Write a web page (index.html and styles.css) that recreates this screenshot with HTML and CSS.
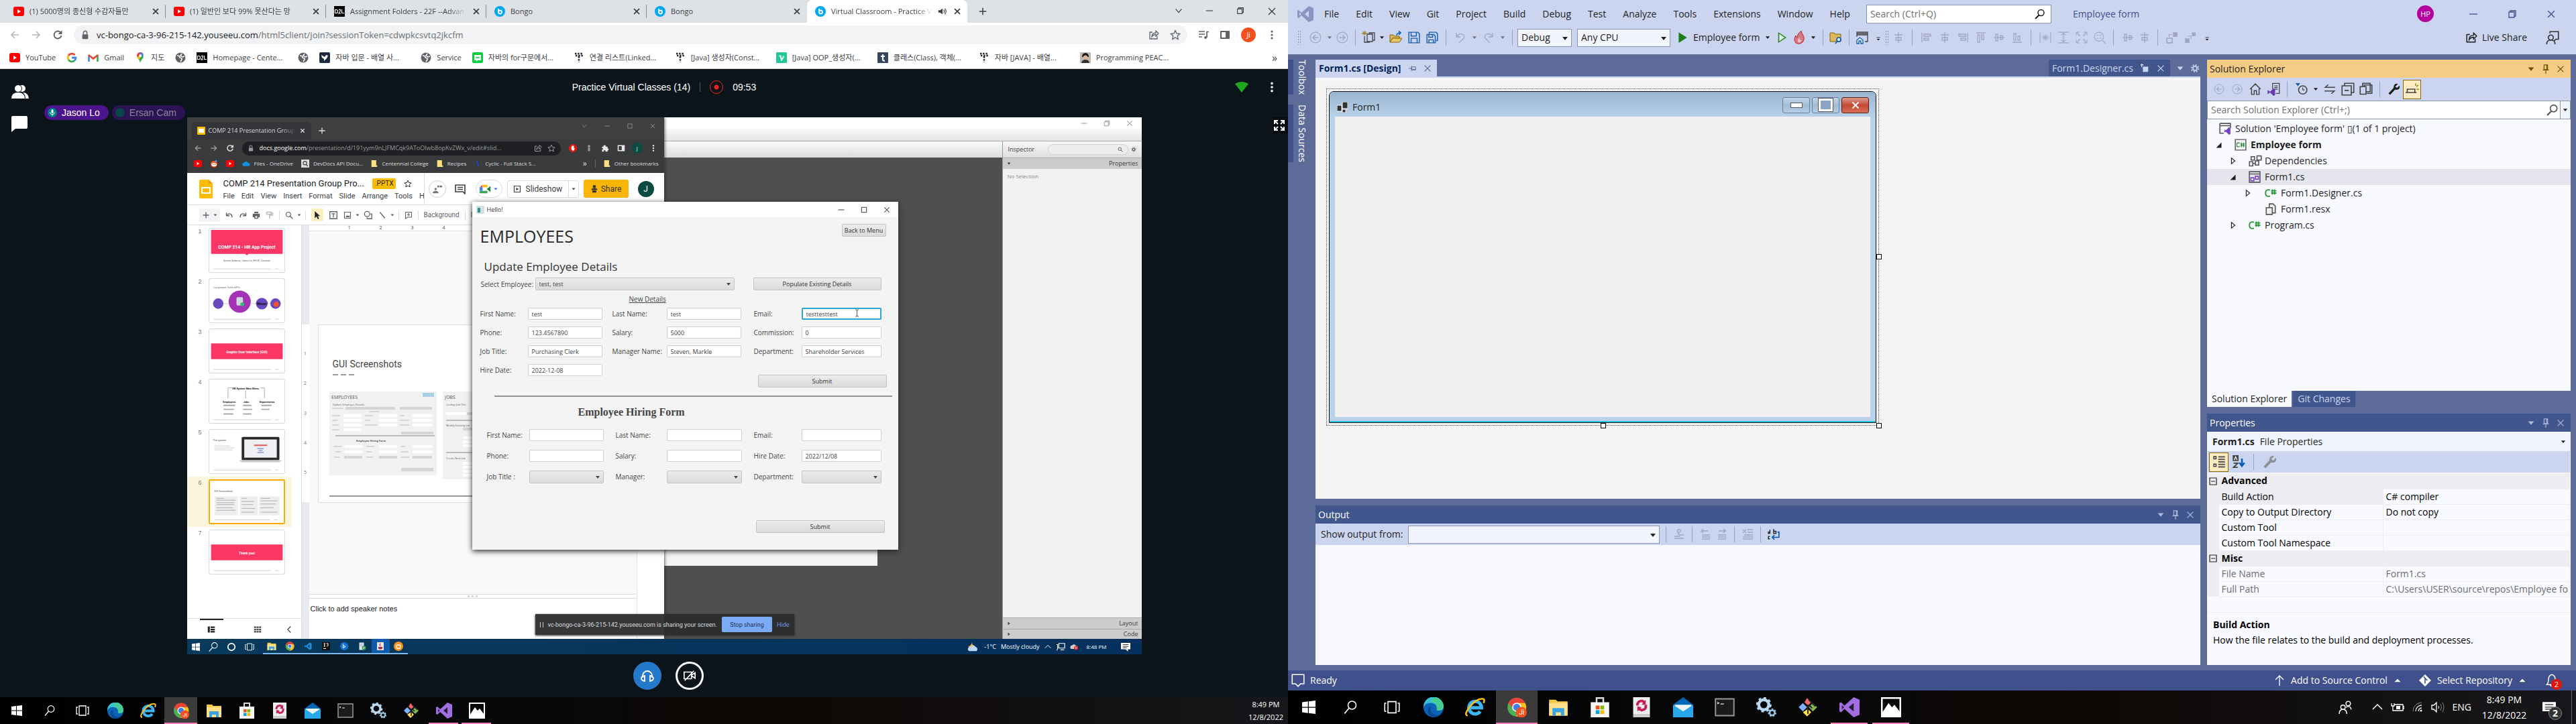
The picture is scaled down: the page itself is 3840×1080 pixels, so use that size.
FILE: index.html
```html
<!DOCTYPE html>
<html lang="en">
<head>
<meta charset="utf-8">
<title>Dual desktop</title>
<link rel="stylesheet" href="styles.css">
</head>
<body>
<svg class="sprite" aria-hidden="true">
  <symbol id="x" viewBox="0 0 16 16"><path d="M3 3l10 10M13 3L3 13" fill="none" stroke="currentColor" stroke-width="1.4"/></symbol>
  <symbol id="xb" viewBox="0 0 16 16"><path d="M3.500 3.500l9 9M12.500 3.500l-9 9" fill="none" stroke="currentColor" stroke-width="2"/></symbol>
  <symbol id="min" viewBox="0 0 16 16"><path d="M2 8h12" stroke="currentColor" stroke-width="1.300"/></symbol>
  <symbol id="max" viewBox="0 0 16 16"><path d="M3 3h10v10H3z" fill="none" stroke="currentColor" stroke-width="1.300"/></symbol>
  <symbol id="restore" viewBox="0 0 16 16"><path d="M3 5h8v8H3zM5 5V3h8v8h-2" fill="none" stroke="currentColor" stroke-width="1.300"/></symbol>
  <symbol id="chev" viewBox="0 0 16 16"><path d="M3 5l5 6 5-6" fill="none" stroke="currentColor" stroke-width="1.300"/></symbol>
  <symbol id="chevup" viewBox="0 0 16 16"><path d="M1 11l7-7 7 7" fill="none" stroke="currentColor" stroke-width="1.500"/></symbol>
  <symbol id="chevl" viewBox="0 0 16 16"><path d="M11 2L5 8l6 6" fill="none" stroke="currentColor" stroke-width="1.600"/></symbol>
  <symbol id="plus" viewBox="0 0 16 16"><path d="M8 2v12M2 8h12" stroke="currentColor" stroke-width="1.800"/></symbol>
  <symbol id="tri" viewBox="0 0 16 16"><path d="M3 5h10l-5 6z" fill="currentColor"/></symbol>
  <symbol id="triup" viewBox="0 0 16 16"><path d="M2 11h12L8 5z" fill="currentColor"/></symbol>
  <symbol id="trir" viewBox="0 0 16 16"><path d="M5 3l6 5-6 5z" fill="none" stroke="currentColor" stroke-width="1.300"/></symbol>
  <symbol id="trirf" viewBox="0 0 16 16"><path d="M5 3l6 5-6 5z" fill="currentColor"/></symbol>
  <symbol id="tric" viewBox="0 0 16 16"><path d="M12 4v9H3z" fill="currentColor"/></symbol>
  <symbol id="yt" viewBox="0 0 16 16"><rect y="1" width="16" height="14" rx="3" fill="#f00"/><path d="M6 5l5 3-5 3z" fill="#fff"/></symbol>
  <symbol id="d2l" viewBox="0 0 16 16"><rect width="16" height="16" fill="#000"/><path d="M1.500 5v6M2 5.500h1.500q2 0 2 2.500t-2 2.500H2M7 6q2-2 2.500 0Q9.500 8 7 11h3M11.500 5v5.500h3.500" fill="none" stroke="#fff" stroke-width="1.200"/></symbol>
  <symbol id="bongo" viewBox="0 0 16 16"><circle cx="8" cy="8" r="8" fill="#00a8f3"/><circle cx="8.500" cy="9" r="2.500" fill="none" stroke="#fff" stroke-width="1.800"/><path d="M6 4v5" stroke="#fff" stroke-width="1.800"/></symbol>
  <symbol id="back" viewBox="0 0 16 16"><path d="M14 8H3M8 3L3 8l5 5" fill="none" stroke="currentColor" stroke-width="1.700"/></symbol>
  <symbol id="fwd" viewBox="0 0 16 16"><path d="M2 8h11M8 3l5 5-5 5" fill="none" stroke="currentColor" stroke-width="1.700"/></symbol>
  <symbol id="reload" viewBox="0 0 16 16"><path d="M13 5.500A5.500 5.500 0 1 0 13.500 9" fill="none" stroke="currentColor" stroke-width="1.900"/><path d="M14.500 1v6h-6z" fill="currentColor"/></symbol>
  <symbol id="lock" viewBox="0 0 16 16"><rect x="3" y="7" width="10" height="8" rx="1" fill="currentColor"/><path d="M5 7V4.500a3 3 0 0 1 6 0V7" fill="none" stroke="currentColor" stroke-width="1.700"/></symbol>
  <symbol id="share" viewBox="0 0 16 16"><path d="M6 4H2v10h11v-4M5 11q0-6 6-6V2l4 4-4 4V7.500q-4 0-6 3.500z" fill="none" stroke="currentColor" stroke-width="1.300"/></symbol>
  <symbol id="star" viewBox="0 0 16 16"><path d="M8 1.500l2 4.500 4.800.5-3.600 3.200 1 4.800L8 12l-4.200 2.500 1-4.800L1.200 6.500 6 6z" fill="none" stroke="currentColor" stroke-width="1.300"/></symbol>
  <symbol id="music" viewBox="0 0 16 16"><path d="M1 3h9M1 7h9M1 11h5M13 3v9M12.500 3.500H16" stroke="currentColor" stroke-width="1.700"/><circle cx="11" cy="12" r="2" fill="currentColor"/></symbol>
  <symbol id="panel" viewBox="0 0 16 16"><path d="M2 3h12v10H2z" fill="none" stroke="currentColor" stroke-width="2"/><path d="M9 3h5v10H9z" fill="currentColor"/></symbol>
  <symbol id="dots" viewBox="0 0 16 16"><circle cx="8" cy="3" r="1.600" fill="currentColor"/><circle cx="8" cy="8" r="1.600" fill="currentColor"/><circle cx="8" cy="13" r="1.600" fill="currentColor"/></symbol>
  <symbol id="speaker" viewBox="0 0 16 16"><path d="M1 6h3l4-3v10l-4-3H1z" fill="currentColor"/><path d="M10 5q2 3 0 6M12 3q4 5 0 10" fill="none" stroke="currentColor" stroke-width="1.300"/></symbol>
  <symbol id="google" viewBox="0 0 16 16"><g fill="none" stroke-width="2.800"><path d="M12.500 4A6 6 0 0 0 3 5" stroke="#ea4335"/><path d="M3 5a6 6 0 0 0 0 6" stroke="#fbbc04"/><path d="M3 11a6 6 0 0 0 9 1.500" stroke="#34a853"/><path d="M12 12.500Q14 11 14 8H8" stroke="#4285f4"/></g></symbol>
  <symbol id="gmail" viewBox="0 0 16 16"><path d="M1.500 14V4" stroke="#4285f4" stroke-width="2.600"/><path d="M14.500 14V4" stroke="#34a853" stroke-width="2.600"/><path d="M1 4l7 5.500L15 4" fill="none" stroke="#ea4335" stroke-width="2.800"/></symbol>
  <symbol id="pin" viewBox="0 0 16 16"><path d="M8 16Q7 11 4 8.500L12 3q2 4-1 7-2 2-3 6z" fill="#34a853"/><path d="M3 6a5 5 0 0 1 5-6l3 1-6 8z" fill="#ea4335"/><path d="M8 0a5 5 0 0 1 5 4L9 8z" fill="#4285f4"/><path d="M3.500 8L8 3l2 3-4 5z" fill="#fbbc04"/><circle cx="8" cy="5" r="2" fill="#fff"/></symbol>
  <symbol id="globe" viewBox="0 0 16 16"><circle cx="8" cy="8" r="7.500" fill="#5f6368"/><path d="M3 5q4 0 4 3l3 1v2l-2 3M10 2l-2 3 3 2 3-1" fill="none" stroke="#fff" stroke-width="1.500"/></symbol>
  <symbol id="bird" viewBox="0 0 16 16"><rect width="16" height="16" rx="2" fill="#1e2a3e"/><path d="M3 4l5 3 2-3 3 1-2 4-4 4v-3L4 8z" fill="#fff"/></symbol>
  <symbol id="naver" viewBox="0 0 16 16"><rect width="16" height="16" rx="2" fill="#06d03f"/><path d="M3 4h10v8H8l-2 2v-2H3z" fill="#fff"/><path d="M5 8h6" stroke="#06d03f" stroke-width="1.500"/></symbol>
  <symbol id="tdots" viewBox="0 0 16 16"><path d="M2 2h12M8 6v9M3 5h11" stroke="#222" stroke-width="2.600" stroke-dasharray="2.400 1.800"/></symbol>
  <symbol id="velog" viewBox="0 0 16 16"><rect width="16" height="16" rx="1" fill="#20c997"/><path d="M4.500 5.500h2l1.500 6q3-3 3-6" fill="none" stroke="#fff" stroke-width="1.800"/></symbol>
  <symbol id="tumblr" viewBox="0 0 16 16"><rect width="16" height="16" rx="1" fill="#36465d"/><path d="M8 3v8q0 2 3 1.500M5 6h6" fill="none" stroke="#fff" stroke-width="2.200"/></symbol>
  <symbol id="face" viewBox="0 0 16 16"><rect width="16" height="16" fill="#bdb9b0"/><path d="M3 7q0-6 5-6t5 6z" fill="#1c1a18"/><circle cx="8" cy="8" r="3.500" fill="#d9b294"/><path d="M2 16q1-5 6-5t6 5z" fill="#333"/></symbol>
  <symbol id="users" viewBox="0 0 26 20"><ellipse cx="16" cy="5" rx="5" ry="5" fill="#fff"/><path d="M17 11q8 0 9 9h-5q0-6-4-9z" fill="#fff"/><circle cx="10" cy="5" r="5.500" fill="#fff" stroke="#0c141b"/><path d="M0 20q0-9 10-9t10 9z" fill="#fff"/></symbol>
  <symbol id="bubble" viewBox="0 0 24 24"><path d="M2 0h20q2 0 2 2v15q0 2-2 2H6l-6 5V2q0-2 2-2z" fill="#fff"/></symbol>
  <symbol id="wifi" viewBox="0 0 20 16"><path d="M0 3q10-6 20 0L10 16z" fill="#1fa81f"/></symbol>
  <symbol id="expand" viewBox="0 0 16 16"><path d="M1 6V1h5M10 1h5v5M15 10v5h-5M6 15H1v-5M1 1l5 5M15 1l-5 5M15 15l-5-5M1 15l5-5" fill="none" stroke="#fff" stroke-width="2"/></symbol>
  <symbol id="mic" viewBox="0 0 14 14"><circle cx="7" cy="7" r="7" fill="#008081"/><rect x="5.500" y="2" width="3" height="6" rx="1.500" fill="#fff"/><path d="M3.500 6.500q0 3 3.500 3t3.500-3M7 9.500V12" fill="none" stroke="#fff"/></symbol>
  <symbol id="head" viewBox="0 0 20 20"><path d="M3 13v-3a7 7 0 0 1 14 0v3" fill="none" stroke="#fff" stroke-width="1.800"/><path d="M6 10v8q-5-1-5-4t5-4zM14 10v8q5-1 5-4t-5-4z" fill="none" stroke="#fff" stroke-width="1.800"/></symbol>
  <symbol id="nocam" viewBox="0 0 22 18"><path d="M2 3h12v11H2zM14 8l6-4v9l-6-4M3 17L18 1" fill="none" stroke="#fff" stroke-width="1.800"/></symbol>
  <symbol id="slidesf" viewBox="0 0 20 28"><path d="M2 0h12l6 6v20q0 2-2 2H2q-2 0-2-2V2q0-2 2-2z" fill="#fbbc04"/><path d="M14 0l6 6h-6z" fill="#e8a000"/><path d="M4 12h12v8H4z" fill="none" stroke="#fff" stroke-width="2"/></symbol>
  <symbol id="slidesm" viewBox="0 0 12 12"><rect width="12" height="12" rx="1" fill="#fbbc04"/><rect x="2" y="3" width="8" height="6" fill="#fff"/></symbol>
  <symbol id="hand" viewBox="0 0 16 16"><path d="M5 0h6l5 5v6l-5 5H5l-5-5V5z" fill="#e3160b"/><path d="M5 5v5l2 3h3l2-5-2 1V4L9 3 7 3z" fill="#fff"/></symbol>
  <symbol id="puzzle" viewBox="0 0 16 16"><path d="M2 5h3q-1-3 2-3t2 3h4v4q2-1 2 1.500T13 12v3H9q0-3-2-3t-2 3H2v-4q2 0 2-1.500T2 8z" fill="currentColor"/></symbol>
  <symbol id="person" viewBox="0 0 16 16"><circle cx="8" cy="4" r="2.500" fill="currentColor"/><path d="M6 7h4v7H6z" fill="currentColor"/></symbol>
  <symbol id="activity" viewBox="0 0 16 16"><circle cx="5" cy="8" r="2" fill="currentColor"/><path d="M0 15q0-4 5-4t5 4zM8 2h3v3H8zM12 2h4v3h-4z" fill="currentColor"/></symbol>
  <symbol id="shareman" viewBox="0 0 16 16"><circle cx="8" cy="3" r="3" fill="currentColor"/><path d="M2 10q0-4 6-4t6 4zM4 11h8v4H4z" fill="currentColor"/></symbol>
  <symbol id="reddit" viewBox="0 0 16 16"><circle cx="8" cy="9" r="6.500" fill="#ff5a1f"/><ellipse cx="8" cy="10" rx="5" ry="3.500" fill="#fff"/><circle cx="6" cy="9.500" r="1" fill="#f40"/><circle cx="10" cy="9.500" r="1" fill="#f40"/><circle cx="12" cy="3" r="2" fill="#39f"/></symbol>
  <symbol id="cloud" viewBox="0 0 16 12"><path d="M4 11a3.500 3.500 0 0 1 0-7 4.500 4.500 0 0 1 8 1 3 3 0 0 1 1 6z" fill="#1490df"/></symbol>
  <symbol id="cloudx" viewBox="0 0 16 12"><path d="M4 10a3.500 3.500 0 0 1 0-7 4.500 4.500 0 0 1 8 1 3 3 0 0 1 1 6z" fill="#ccc"/><circle cx="12" cy="8" r="4" fill="#e02b20"/><path d="M10.500 6.500l3 3M13.500 6.500l-3 3" stroke="#fff"/></symbol>
  <symbol id="dev" viewBox="0 0 16 16"><rect width="16" height="16" fill="#ddd"/><circle cx="7.500" cy="7" r="3.500" fill="none" stroke="#444" stroke-width="1.500"/><path d="M10 10l3 3" stroke="#444" stroke-width="2"/></symbol>
  <symbol id="fold" viewBox="0 0 12 14"><path d="M0 0h10v11h2v3H0z" fill="#ffdf7e"/></symbol>
  <symbol id="slash" viewBox="0 0 8 14"><path d="M2 1l4 12" stroke="#1f49b6" stroke-width="3"/></symbol>
  <symbol id="undo" viewBox="0 0 16 16"><path d="M2 3v6h6M2.500 8.500Q7 3 11 6.500q3 2.500 2 6" fill="none" stroke="currentColor" stroke-width="1.800"/></symbol>
  <symbol id="redo" viewBox="0 0 16 16"><path d="M14 3v6H8M13.500 8.500Q9 3 5 6.500q-3 2.500-2 6" fill="none" stroke="currentColor" stroke-width="1.800"/></symbol>
  <symbol id="print" viewBox="0 0 16 16"><path d="M4 1h8v3H4zM1 5h14v7h-3v3H4v-3H1z" fill="currentColor"/><path d="M6 10h4v3H6z" fill="#fff"/></symbol>
  <symbol id="roller" viewBox="0 0 16 16"><path d="M2 2h9v4H2zM11 4h3v4H8v7" fill="none" stroke="currentColor" stroke-width="2"/></symbol>
  <symbol id="mag" viewBox="0 0 16 16"><circle cx="6.500" cy="6.500" r="4.500" fill="none" stroke="currentColor" stroke-width="1.600"/><path d="M10 10l5 5" stroke="currentColor" stroke-width="1.800"/></symbol>
  <symbol id="magr" viewBox="0 0 16 16"><circle cx="9.500" cy="6" r="4.500" fill="none" stroke="currentColor" stroke-width="1.500"/><path d="M6.500 9.500L1 15" stroke="currentColor" stroke-width="1.900"/></symbol>
  <symbol id="arrow" viewBox="0 0 16 16"><path d="M3 0v14l3.500-3.500L9 16l2.500-1L9 9.500h4.500z" fill="#222"/></symbol>
  <symbol id="tbox" viewBox="0 0 16 16"><path d="M2 2h12v12H2zM5 5.500h6M8 5.500V12" fill="none" stroke="currentColor" stroke-width="1.500"/></symbol>
  <symbol id="img" viewBox="0 0 16 16"><path d="M2 2h12v12H2z" fill="none" stroke="currentColor" stroke-width="1.500"/><path d="M4 12l3-4 2 2 2-2 2 4z" fill="currentColor"/></symbol>
  <symbol id="shape" viewBox="0 0 16 16"><circle cx="6" cy="6" r="4.500" fill="none" stroke="currentColor" stroke-width="1.500"/><path d="M12 6h2v8H6v-2" fill="none" stroke="currentColor" stroke-width="1.500"/></symbol>
  <symbol id="line" viewBox="0 0 16 16"><path d="M3 2l10 12" stroke="currentColor" stroke-width="1.700"/></symbol>
  <symbol id="comment" viewBox="0 0 16 16"><path d="M1 2h14v13l-3-3H1zM4 5.500h8M4 8.500h8" fill="none" stroke="currentColor" stroke-width="1.600"/></symbol>
  <symbol id="addc" viewBox="0 0 16 16"><path d="M2 2h12v10H6l-4 3zM8 4v6M5 7h6" fill="none" stroke="currentColor" stroke-width="1.400"/></symbol>
  <symbol id="meet" viewBox="0 0 20 16"><path d="M1 5h5V1z" fill="#ea4335"/><path d="M1 5h5v6H1z" fill="#4285f4"/><path d="M6 1h8v4H6z" fill="#fbbc04"/><path d="M6 11h8v4H1v-4z" fill="#34a853"/><path d="M13 8l6-5v10z" fill="#188038"/></symbol>
  <symbol id="play" viewBox="0 0 16 16"><path d="M2 2h12v12H2z" fill="none" stroke="currentColor" stroke-width="1.600"/><path d="M6 5l5 3-5 3z" fill="currentColor"/></symbol>
  <symbol id="list" viewBox="0 0 16 16"><path d="M1 2h4v12H1zM6.500 2H15v3H6.500zM6.500 6.500H15v3H6.500zM6.500 11H15v3H6.500z" fill="currentColor"/></symbol>
  <symbol id="grid" viewBox="0 0 16 16"><path d="M1 2h4v3H1zM6 2h4v3H6zM11 2h4v3h-4zM1 6.500h4v3H1zM6 6.500h4v3H6zM11 6.500h4v3h-4zM1 11h4v3H1zM6 11h4v3H6zM11 11h4v3h-4z" fill="currentColor"/></symbol>
  <symbol id="win" viewBox="0 0 16 16"><path d="M0 2l7-1v6.500H0zM8 1l8-1v7.500H8zM0 8.500h7V15l-7-1zM8 8.500h8V16l-8-1z" fill="#fff"/></symbol>
  <symbol id="wsearch" viewBox="0 0 16 16"><circle cx="10" cy="5.500" r="4.800" fill="none" stroke="#fff" stroke-width="1.200"/><path d="M6.500 9L1 15.500" stroke="#fff" stroke-width="1.300"/></symbol>
  <symbol id="tview" viewBox="0 0 20 16"><path d="M5 1h10v14H5zM3 3H1v10h2M17 3h2v10h-2" fill="none" stroke="#fff" stroke-width="1.300"/></symbol>
  <symbol id="edge" viewBox="0 0 24 24"><circle cx="12" cy="12" r="12" fill="#0b62b8"/><path d="M0 12A12 12 0 0 1 24 11q0 5-6 5-3 0-2-3 0-5-6-6Q3 6 0 12z" fill="#35c1d8"/><path d="M12 0a12 12 0 0 1 12 11q0 5-6 5-3 0-2-3 0-7-8-8z" fill="#4fd273" opacity=".7"/><path d="M9 12q-2 6 4 9 5 1 8-1-4 5-11 4Q4 20 5 15t4-3z" fill="#0a4a92"/></symbol>
  <symbol id="ie" viewBox="0 0 24 24"><path d="M18 17A7.500 7.500 0 1 1 19.500 12.500H6" fill="none" stroke="#3db5f2" stroke-width="4"/><path d="M3 22Q-2 21 6 11T21 2q3 0 1 5" fill="none" stroke="#fbc21b" stroke-width="2"/></symbol>
  <symbol id="chrome" viewBox="0 0 24 24"><circle cx="12" cy="12" r="11" fill="#4caf50"/><path d="M2 7a11 11 0 0 1 20 0l-10 2-5 4z" fill="#ea4335"/><path d="M22 7H12l4 8-5 8A11 11 0 0 0 22 7z" fill="#fbc116"/><circle cx="12" cy="12" r="5.500" fill="#fff"/><circle cx="12" cy="12" r="4.200" fill="#3d7fe8"/></symbol>
  <symbol id="chromeji" viewBox="0 0 24 24"><use href="#chrome"/><circle cx="17.500" cy="18" r="6.500" fill="#f4511e"/><text x="14.500" y="21" font-size="8" fill="#fff" font-family="Roboto, sans-serif">Ji</text></symbol>
  <symbol id="expl" viewBox="0 0 24 24"><path d="M1 3h8l2 2h12v17H1z" fill="#f7c948"/><path d="M1 7h22v15H1z" fill="#ffe08a"/><path d="M5 22v-9h14v9h-4v-4H9v4z" fill="#3aa3e3"/></symbol>
  <symbol id="store" viewBox="0 0 24 24"><path d="M8 7V1h8v6" fill="none" stroke="#ddd" stroke-width="2"/><path d="M1 6h22v18H1z" fill="#f5f5f5"/><path d="M7 10h4.500v4.500H7z" fill="#f25022"/><path d="M12.500 10H17v4.500h-4.500z" fill="#7fba00"/><path d="M7 15.500h4.500V20H7z" fill="#00a4ef"/><path d="M12.500 15.500H17V20h-4.500z" fill="#ffb900"/></symbol>
  <symbol id="sync" viewBox="0 0 24 24"><path d="M2 0h20v20H2z" fill="#eee"/><path d="M2 20h20v4H2z" fill="#ccc"/><path d="M7 10q0-6 6-5.500l3 2M17 9q1 6-5 6.500l-4-2" fill="none" stroke="#c81e5a" stroke-width="3"/><path d="M17 3v6h-5zM7 17v-6l5 1z" fill="#c81e5a"/></symbol>
  <symbol id="mail" viewBox="0 0 24 24"><path d="M0 9L12 0l12 9v15H0z" fill="#0364b8"/><path d="M2 9h20v8H2z" fill="#eef6fc"/><path d="M0 9l12 8 12-8v15H0z" fill="#28a8ea"/></symbol>
  <symbol id="cmd" viewBox="0 0 24 24"><path d="M1 2h22v20H1z" fill="#1b1b1b" stroke="#999" stroke-width="1.500"/><path d="M3 6l2 1-2 1M7 8h4" stroke="#eee" fill="none"/></symbol>
  <symbol id="gears" viewBox="0 0 24 24"><circle cx="9" cy="9" r="6" fill="none" stroke="#b9d8ef" stroke-width="3.500"/><circle cx="9" cy="9" r="8" fill="none" stroke="#b9d8ef" stroke-width="2.500" stroke-dasharray="3 3.200"/><circle cx="19" cy="18.500" r="3" fill="none" stroke="#9cc6e5" stroke-width="2"/><circle cx="19" cy="18.500" r="4.300" fill="none" stroke="#9cc6e5" stroke-width="1.500" stroke-dasharray="2 1.800"/></symbol>
  <symbol id="gitb" viewBox="0 0 24 24"><path d="M11 1l5 5-4 4-4-4z" fill="#f0696a"/><path d="M1 12l5-5 5 5-5 5z" fill="#80b3ff"/><path d="M12 14l4 4-5 5-5-5z" fill="#ffdd55"/><path d="M18 7l5 5-5 5-5-5z" fill="#87b84f"/><path d="M13 3l8 8M12 9v11M13 9l4 4" stroke="#222" stroke-width="1.500"/></symbol>
  <symbol id="vs" viewBox="0 0 24 24"><path d="M17 0l7 3v18l-7 3L6 14l-4 4-2-1V7l2-1 4 4z" fill="currentColor"/><path d="M17 7v10l-6-5zM3 9.500v5L5.500 12z" fill="#000" opacity=".75"/></symbol>
  <symbol id="vslogo" viewBox="0 0 24 24"><path d="M17 0l7 3v18l-7 3L6 14l-4 4-2-1V7l2-1 4 4z" fill="currentColor"/><path d="M17 7v10l-6-5zM3 9.500v5L5.500 12z" fill="#ccd5f0"/></symbol>
  <symbol id="photo" viewBox="0 0 24 24"><path d="M1 1h22v22H1z" fill="none" stroke="#fff" stroke-width="2"/><path d="M1 19L9 7l4 5 3-3 7 9v5H1z" fill="#fff"/></symbol>
  <symbol id="vscode" viewBox="0 0 24 24"><path d="M17 1l6 3v16l-6 3L6 13l-4 3V8l4 3z" fill="#1f8fdc"/><path d="M17 7v10l-6-5z" fill="#0a3b60"/></symbol>
  <symbol id="ij" viewBox="0 0 24 24"><rect width="24" height="24" fill="#111"/><path d="M5 4h5M7.500 4v8M5 12h5M13 4h5v6q0 2-4 2M4 19h8" stroke="#fff" stroke-width="2" fill="none"/></symbol>
  <symbol id="bblue" viewBox="0 0 24 24"><circle cx="12" cy="12" r="12" fill="#1673d8"/><path d="M9 5v12l7-4-6-3" stroke="#fff" stroke-width="2" fill="none"/></symbol>
  <symbol id="sheet" viewBox="0 0 24 24"><path d="M3 1h14v22H3z" fill="#dfe8f5"/><path d="M5 6h10M5 11h10" stroke="#567"/><circle cx="17" cy="17" r="6" fill="#28a745"/><path d="M15 14l5 3-5 3z" fill="#fff"/></symbol>
  <symbol id="java" viewBox="0 0 24 24"><rect x="2" width="20" height="24" fill="#e5e5ea"/><path d="M12 3q-4 5 0 9M6 15h12l-2 5H8z" stroke="#c33" stroke-width="2" fill="#447"/></symbol>
  <symbol id="orange" viewBox="0 0 24 24"><circle cx="12" cy="12" r="12" fill="#f7931e"/><circle cx="12" cy="13" r="5" fill="none" stroke="#fff" stroke-width="2.500"/></symbol>
  <symbol id="circle" viewBox="0 0 24 24"><ellipse cx="12" cy="12" rx="9" ry="9" fill="none" stroke="#fff" stroke-width="3"/></symbol>
  <symbol id="weather" viewBox="0 0 20 16"><path d="M8 0q-1 5 4 6l-6 4-5-3q5 0 7-7z" fill="#f7b23b"/><path d="M4 15a3.500 3.500 0 0 1 1-7q5-5 9 0a4 4 0 0 1 1 7z" fill="#bcd7fa"/></symbol>
  <symbol id="net" viewBox="0 0 16 16"><path d="M5 2h10v8H5zM1 4h2v8M8 13h6M2 12v2" fill="none" stroke="#fff" stroke-width="1.300"/></symbol>
  <symbol id="note" viewBox="0 0 16 16"><path d="M0 1h16v11h-4v4l-4-4H0z" fill="#fff"/><path d="M3 4h10M3 7h10M3 9.500h7" stroke="#222"/></symbol>
  <symbol id="gear" viewBox="0 0 16 16"><circle cx="8" cy="8" r="3.500" fill="none" stroke="currentColor" stroke-width="2"/><circle cx="8" cy="8" r="6" fill="none" stroke="currentColor" stroke-width="2" stroke-dasharray="2.300 2.400"/></symbol>
  <symbol id="cback" viewBox="0 0 16 16"><circle cx="8" cy="8" r="7" fill="none" stroke="currentColor"/><path d="M12 8H4.500M8 4.500L4.500 8 8 11.500" fill="none" stroke="currentColor" stroke-width="1.200"/></symbol>
  <symbol id="cfwd" viewBox="0 0 16 16"><circle cx="8" cy="8" r="7" fill="none" stroke="currentColor"/><path d="M4 8h7.500M8 4.500L11.500 8 8 11.500" fill="none" stroke="currentColor" stroke-width="1.200"/></symbol>
  <symbol id="newp" viewBox="0 0 20 20"><path d="M4 8v9h8M8 5h8v11H8zM11 5V3h8v11h-3" fill="none" stroke="#444" stroke-width="1.300"/><path d="M4 0v7M0 3.500h8M1.500 1l5 5M6.500 1l-5 5" stroke="#9a7000"/></symbol>
  <symbol id="open" viewBox="0 0 20 20"><path d="M1 17V6h5l2 2h7v3H5z" fill="#d9b65d" stroke="#8a6500"/><path d="M1 17l4-6h14l-4 6z" fill="#e8c66c" stroke="#8a6500"/><path d="M11 7q0-4 5-4M14 0l3 3-3 3" fill="none" stroke="#005dba" stroke-width="1.500"/></symbol>
  <symbol id="save" viewBox="0 0 16 16"><path d="M1 1h12l2 2v12H1zM4 1v5h7V1M4 15V9h8v6" fill="none" stroke="#1c5fae" stroke-width="1.300"/></symbol>
  <symbol id="saveall" viewBox="0 0 16 16"><path d="M1 4h9l2 2v9H1zM3.500 4v3.500h5V4M3.500 15v-4h6v4M4 3V1h9l2 2v9h-2" fill="none" stroke="#1c5fae" stroke-width="1.300"/></symbol>
  <symbol id="vundo" viewBox="0 0 16 16"><path d="M2 1v6h6M2 7q4-6 9-4 5 3 1 7l-6 6" fill="none" stroke="currentColor" stroke-width="1.300"/></symbol>
  <symbol id="vredo" viewBox="0 0 16 16"><path d="M14 1v6H8M14 7q-4-6-9-4-5 3-1 7l6 6" fill="none" stroke="currentColor" stroke-width="1.300"/></symbol>
  <symbol id="run" viewBox="0 0 16 16"><path d="M3 1l11 7-11 7z" fill="#1a7f1a"/></symbol>
  <symbol id="runo" viewBox="0 0 16 16"><path d="M4 2l9 6-9 6z" fill="#dfeee3" stroke="#1a7f1a" stroke-width="1.300"/></symbol>
  <symbol id="fire" viewBox="0 0 16 20"><path d="M11 0q1 4 3 7 3 6-1 10-5 4-10 1-4-5 0-11 0 3 2 3Q5 4 11 0z" fill="#d4797f" stroke="#b3242e"/><path d="M8 18q-4-3 0-8 1 4 3 4t-3 4z" fill="#f0c0c4"/></symbol>
  <symbol id="foldsearch" viewBox="0 0 20 20"><path d="M1 16V3h6l2 2h8v11z" fill="#dcb85c" stroke="#8a6500"/><circle cx="14" cy="13" r="3" fill="#dbe6ff" stroke="#005dba" stroke-width="1.500"/><path d="M12 15l-3 4" stroke="#005dba" stroke-width="1.600"/></symbol>
  <symbol id="winhome" viewBox="0 0 20 20"><path d="M2 9V2h16v14h-4M2 6h16M2 4h16" fill="none" stroke="#444" stroke-width="1.300"/><path d="M2 19v-5l4.500-4 4.500 4v5H8v-4H5v4z" fill="#fff" stroke="#005dba" stroke-width="1.300"/></symbol>
  <symbol id="over" viewBox="0 0 10 16"><path d="M1 8h8" stroke="#222" stroke-width="1.500"/><path d="M1 11h8l-4 4z" fill="#222"/></symbol>
  <symbol id="al1" viewBox="0 0 16 16"><path d="M8 0v16M2 4h12M4 8h8v4H4z" fill="none" stroke="currentColor" stroke-width="1.300"/></symbol>
  <symbol id="al2" viewBox="0 0 16 16"><path d="M1 1v14M4 3h10v3H4zM4 9h7v3H4z" fill="none" stroke="currentColor" stroke-width="1.300"/></symbol>
  <symbol id="al3" viewBox="0 0 16 16"><path d="M15 1v14M2 3h10v3H2zM5 9h7v3H5z" fill="none" stroke="currentColor" stroke-width="1.300"/></symbol>
  <symbol id="al4" viewBox="0 0 16 16"><path d="M1 1h14M3 4h3v11H3zM9 4h3v7H9z" fill="none" stroke="currentColor" stroke-width="1.300"/></symbol>
  <symbol id="al5" viewBox="0 0 16 16"><path d="M0 8h16M3 3h3v10H3zM10 5h3v6h-3z" fill="none" stroke="currentColor" stroke-width="1.300"/></symbol>
  <symbol id="al6" viewBox="0 0 16 16"><path d="M1 15h14M3 2h3v10H3zM9 6h3v6H9z" fill="none" stroke="currentColor" stroke-width="1.300"/></symbol>
  <symbol id="sp1" viewBox="0 0 16 16"><path d="M1 1v14M15 1v14M3 8h10M8 4v8M5 5l6 6M11 5l-6 6" fill="none" stroke="currentColor"/></symbol>
  <symbol id="sp2" viewBox="0 0 16 16"><path d="M1 1h14M1 15h14M8 3v10M5 5l3-3 3 3M5 11l3 3 3-3" fill="none" stroke="currentColor"/></symbol>
  <symbol id="sp3" viewBox="0 0 16 16"><path d="M1 5V1h4M11 1h4v4M15 11v4h-4M5 15H1v-4M2 2l4 4M14 2l-4 4M14 14l-4-4M2 14l4-4" fill="none" stroke="currentColor"/></symbol>
  <symbol id="sp4" viewBox="0 0 16 16"><circle cx="7" cy="7" r="6" fill="none" stroke="currentColor"/><path d="M4 5h2M4 9h2M8 5h2M8 9h2M12 12l4 4" stroke="currentColor" stroke-width="1.300"/></symbol>
  <symbol id="fr1" viewBox="0 0 16 16"><path d="M1 9h7v6H1z" fill="none" stroke="currentColor" stroke-width="1.500"/><path d="M9 1h6v6H9z" fill="currentColor"/><path d="M4 7V4h4" fill="none" stroke="currentColor"/></symbol>
  <symbol id="fr2" viewBox="0 0 16 16"><path d="M1 9h6v6H1zM10 1h5v5h-5z" fill="currentColor"/><path d="M5 6h4v4" fill="none" stroke="currentColor"/></symbol>
  <symbol id="pinv" viewBox="0 0 16 16"><path d="M5 1h6v8H5zM3 9.500h10M8 10v6M9.500 1v8" fill="none" stroke="currentColor" stroke-width="1.300"/></symbol>
  <symbol id="pinh" viewBox="0 0 16 16"><path d="M7 5h8v6H7zM7 3v10M7 8H1M7 10h8" fill="none" stroke="currentColor" stroke-width="1.300"/></symbol>
  <symbol id="keep" viewBox="0 0 16 16"><path d="M5 5h9v9H5z" fill="currentColor"/><path d="M1 2h5M3 0v6" stroke="currentColor" stroke-width="1.500"/></symbol>
  <symbol id="home" viewBox="0 0 16 16"><path d="M1 8l7-7 7 7M3 7v8h3.500v-5h3v5H13V7" fill="none" stroke="#444" stroke-width="1.300"/></symbol>
  <symbol id="vsdoc" viewBox="0 0 16 16"><path d="M7 8V1h8v12h-4M9 4h4M9 6h4M9 8h4" fill="none" stroke="#444"/><path d="M8 7l2 1v7l-2 1-4-4-3 2V9l3 2z" fill="#6a3ab2"/></symbol>
  <symbol id="clock" viewBox="0 0 16 16"><circle cx="9.500" cy="9" r="5.500" fill="none" stroke="#444" stroke-width="1.400"/><path d="M9.500 5.500V9H12" fill="none" stroke="#444"/><path d="M0 0h6L3 4z" fill="#005dba"/></symbol>
  <symbol id="swap" viewBox="0 0 16 16"><path d="M15 5.500H2L6 2M1 10.500h13L10 14" fill="none" stroke="#444" stroke-width="1.400"/></symbol>
  <symbol id="coll" viewBox="0 0 16 16"><path d="M1 4h11v11H1zM4 4V1h11v11h-3M4 9.500h5" fill="none" stroke="#444" stroke-width="1.300"/></symbol>
  <symbol id="files" viewBox="0 0 16 16"><path d="M1 5h7v9H1zM4 5V1h9v10H8M6 5V3h9v10H9" fill="none" stroke="#444" stroke-width="1.300"/></symbol>
  <symbol id="wrench" viewBox="0 0 16 16"><path d="M1.500 14.500L9 6.500" stroke="currentColor" stroke-width="3"/><path d="M13 1L9.500 4.500l2 2L15 3q1 4-2 5.500-3 1-5-1Q6.500 5 8 2.500T13 1z" fill="currentColor"/></symbol>
  <symbol id="prev" viewBox="0 0 16 16"><path d="M2 8h9v4H2zM0 12h13" fill="none" stroke="#444" stroke-width="1.300"/><path d="M12 1v3M15 3l-2 2M16 8h-3" stroke="#9a7000"/></symbol>
  <symbol id="sln" viewBox="0 0 16 16"><path d="M1 1h14v6M1 4h14M1 1v13h5" fill="none" stroke="#555" stroke-width="1.400"/><path d="M13 6l2 1v8l-2 1-4-4-2 1V9l2 1z" fill="#7a45c4"/></symbol>
  <symbol id="csproj" viewBox="0 0 16 16"><path d="M1 1h14v14H1z" fill="#f5f5f5" stroke="#555" stroke-width="1.300"/><path d="M7 6q-4-2-4 2t4 2M9 5v6M12 5v6M8 7h5.500M8 9h5.500" fill="none" stroke="#2b9348" stroke-width="1.200"/></symbol>
  <symbol id="deps" viewBox="0 0 16 16"><path d="M1 9h4v5H1zM3 3h4v4H3zM10 2h5v5h-5zM8 8h4v5H8zM5 11h3" fill="none" stroke="#555" stroke-width="1.300"/></symbol>
  <symbol id="formi" viewBox="0 0 16 16"><path d="M1 1h14v14H1zM1 4h14" fill="none" stroke="#555" stroke-width="1.400"/><path d="M3 9h4v4H3zM9 7h4v4H9z" fill="none" stroke="#7a45c4" stroke-width="1.400"/></symbol>
  <symbol id="cs" viewBox="0 0 16 16"><path d="M7 4Q1 2.500 1 8t6 4M10 3v7M13 3v7M8.500 5h7M8.500 8h7" fill="none" stroke="#2f9a3d" stroke-width="1.700"/></symbol>
  <symbol id="resx" viewBox="0 0 16 16"><path d="M2 6h8v9H2zM6 6V1h5l3 3v9h-4" fill="#eee" stroke="#555" stroke-width="1.400"/></symbol>
  <symbol id="cat" viewBox="0 0 16 16"><path d="M1 1h4v4H1zM1 10h4v4H1z" fill="#444"/><path d="M7 2h8M7 5h8M7 8h8M7 11h8M7 14h8" stroke="#555" stroke-width="1.500"/><path d="M2 3h2M2 12h2" stroke="#fff"/></symbol>
  <symbol id="az" viewBox="0 0 16 16"><path d="M1 0h7v7H1z" fill="#444"/><path d="M2 9.500h5l-5 5h5" fill="none" stroke="#444" stroke-width="1.500"/><path d="M2.800 5.800l1.700-4 1.700 4" fill="none" stroke="#fff"/><path d="M12 4v8M9 9l3 4 3-4" fill="none" stroke="#005dba" stroke-width="2"/></symbol>
  <symbol id="boxm" viewBox="0 0 12 12"><path d="M1 1h10v10H1zM3 6h6" fill="none" stroke="#222" stroke-width="1.200"/></symbol>
  <symbol id="winf" viewBox="0 0 16 16"><path d="M8 0h8v10H8zM0 5h7v9H0zM8 11h5v5H8z" fill="#333" stroke="#fff"/></symbol>
  <symbol id="up" viewBox="0 0 16 16"><path d="M8 16V1M2 7l6-6 6 6" fill="none" stroke="#fff" stroke-width="1.300"/></symbol>
  <symbol id="gitd" viewBox="0 0 16 16"><path d="M8 0l8 8-8 8-8-8z" fill="#fff"/><path d="M6 3l5 5M8 5v7" stroke="#40508d" stroke-width="1.400"/></symbol>
  <symbol id="bell" viewBox="0 0 16 16"><path d="M2 13q2-2 2-6 0-5 4-6 4 1 4 6 0 4 2 6zM6 13q0 2 4 2" fill="none" stroke="#fff" stroke-width="1.200"/></symbol>
  <symbol id="fb" viewBox="0 0 16 16"><path d="M1 1h14v11h-4l-3 3-3-3H1z" fill="none" stroke="#fff" stroke-width="1.300"/></symbol>
  <symbol id="pplo" viewBox="0 0 18 18"><circle cx="6" cy="9" r="3" fill="none" stroke="#fff" stroke-width="1.300"/><circle cx="13" cy="4" r="3" fill="none" stroke="#fff" stroke-width="1.300"/><path d="M1 18q0-6 5-6t5 6M10 9q6-3 7 3" fill="none" stroke="#fff" stroke-width="1.300"/></symbol>
  <symbol id="batt" viewBox="0 0 20 16"><path d="M5 4h13v9H3V9M18 7h2v3h-2M1 2v4h4V2M3 6v4" fill="none" stroke="#fff" stroke-width="1.300"/><path d="M8 6h6v5H8z" fill="#fff"/></symbol>
  <symbol id="wf" viewBox="0 0 16 16"><path d="M1 14A13 13 0 0 1 14 1" fill="none" stroke="#888"/><path d="M5 14a9 9 0 0 1 9-9M9 14a5 5 0 0 1 5-5" fill="none" stroke="#fff" stroke-width="1.300"/><circle cx="13" cy="13" r="1.500" fill="#fff"/></symbol>
  <symbol id="snd" viewBox="0 0 20 16"><path d="M1 5h3l4-4v14l-4-4H1z" fill="none" stroke="#fff" stroke-width="1.300"/><path d="M11 6q1 2 0 4" stroke="#fff" fill="none"/><path d="M14 3q3 5 0 10M17 1q4 7 0 14" fill="none" stroke="#888"/></symbol>
  <symbol id="fbp" viewBox="0 0 16 16"><circle cx="6" cy="8" r="3" fill="none" stroke="#333" stroke-width="1.300"/><path d="M1 16q0-5 5-5t5 5M5 3V1h10v9h-3l-2 2" fill="none" stroke="#333" stroke-width="1.300"/></symbol>
  <symbol id="out1" viewBox="0 0 16 16"><path d="M8 9q-5-8 0-8t0 5M1 11h8M1 14h14M8 9h7" fill="none" stroke="currentColor" stroke-width="1.500"/></symbol>
  <symbol id="out2" viewBox="0 0 16 16"><path d="M12 3H2l3-3M2 3l3 3M3 9h12M3 12h12M3 15h12" fill="none" stroke="currentColor" stroke-width="1.500"/></symbol>
  <symbol id="out3" viewBox="0 0 16 16"><path d="M4 3h10l-3-3M14 3l-3 3M3 9h12M3 12h12M3 15h12" fill="none" stroke="currentColor" stroke-width="1.500"/></symbol>
  <symbol id="out4" viewBox="0 0 16 16"><path d="M1 1l5 5M6 1L1 6M8 1h8M8 5h8M3 9h13M1 12h15M1 15h15" fill="none" stroke="currentColor" stroke-width="1.300"/></symbol>
  <symbol id="wrap" viewBox="0 0 16 16"><path d="M3 2v5M3 5h-2v2h2M8 1v6h3V4H8M3 11H1v3h2" fill="none" stroke="#222" stroke-width="1.300"/><path d="M13 5h2v7H6M9 9l-3 3 3 3" fill="none" stroke="#005dba" stroke-width="1.500"/></symbol>
</svg>

<main class="desktops">
<section class="desk left" aria-label="Browser desktop">
  <header class="tabstrip">
    <div class="tab"><svg class="i16"><use href="#yt"/></svg><span class="t fade">(1) 5000명의 종신형 수감자들만</span><svg class="i14"><use href="#xb"/></svg></div>
    <div class="tab"><svg class="i16"><use href="#yt"/></svg><span class="t fade">(1) 일반인 보다 99% 못산다는 망</span><svg class="i14"><use href="#xb"/></svg></div>
    <div class="tab"><svg class="i16"><use href="#d2l"/></svg><span class="t fade">Assignment Folders - 22F --Advan</span><svg class="i14"><use href="#xb"/></svg></div>
    <div class="tab"><svg class="i16"><use href="#bongo"/></svg><span class="t">Bongo</span><svg class="i14"><use href="#xb"/></svg></div>
    <div class="tab last"><svg class="i16"><use href="#bongo"/></svg><span class="t">Bongo</span><svg class="i14"><use href="#xb"/></svg></div>
    <div class="tab active"><svg class="i16"><use href="#bongo"/></svg><span class="t fade">Virtual Classroom - Practice V</span><svg class="i14"><use href="#speaker"/></svg><svg class="i14"><use href="#xb"/></svg></div>
    <svg class="i14 newtab"><use href="#plus"/></svg>
    <div class="winctl w46"><svg class="i14"><use href="#chev"/></svg><svg class="i14"><use href="#min"/></svg><svg class="i14"><use href="#restore"/></svg><svg class="i16"><use href="#x"/></svg></div>
  </header>
  <div class="toolbar">
    <svg class="i16 dim"><use href="#back"/></svg><svg class="i16 dim"><use href="#fwd"/></svg><svg class="i16"><use href="#reload"/></svg>
    <div class="omni"><svg class="i14"><use href="#lock"/></svg><span class="url"><b>vc-bongo-ca-3-96-215-142.youseeu.com</b>/html5client/join?sessionToken=cdwpkcsvtq2jkcfm</span><svg class="i16"><use href="#share"/></svg><svg class="i16"><use href="#star"/></svg></div>
    <svg class="i16"><use href="#music"/></svg><svg class="i16"><use href="#panel"/></svg><span class="ava">Ji</span><svg class="i16"><use href="#dots"/></svg>
  </div>
  <nav class="bookmarks">
    <a href="#"><svg class="i16"><use href="#yt"/></svg>YouTube</a>
    <a href="#"><svg class="i16"><use href="#google"/></svg></a>
    <a href="#"><svg class="i16"><use href="#gmail"/></svg>Gmail</a>
    <a href="#"><svg class="i16"><use href="#pin"/></svg>지도</a>
    <a href="#"><svg class="i16"><use href="#globe"/></svg></a>
    <a class="long" href="#"><svg class="i16"><use href="#d2l"/></svg>Homepage - Cente...</a>
    <a href="#"><svg class="i16"><use href="#globe"/></svg></a>
    <a class="long" href="#"><svg class="i16"><use href="#bird"/></svg>자바 입문 - 배열 사...</a>
    <a href="#"><svg class="i16"><use href="#globe"/></svg>Service</a>
    <a class="long" href="#"><svg class="i16"><use href="#naver"/></svg>자바의 for구문에서...</a>
    <a class="long" href="#"><svg class="i16"><use href="#tdots"/></svg>연결 리스트(Linked...</a>
    <a class="long" href="#"><svg class="i16"><use href="#tdots"/></svg>[Java] 생성자(Const...</a>
    <a class="long" href="#"><svg class="i16"><use href="#velog"/></svg>[Java] OOP_생성자(...</a>
    <a class="long" href="#"><svg class="i16"><use href="#tumblr"/></svg>클래스(Class), 객체(...</a>
    <a class="long" href="#"><svg class="i16"><use href="#tdots"/></svg>자바 [JAVA] - 배열...</a>
    <a class="long" href="#"><svg class="i16"><use href="#face"/></svg>Programming PEAC...</a>
    <a class="more" href="#">»</a>
  </nav>

  <div class="meeting">
    <aside class="mside">
      <svg class="users"><use href="#users"/></svg>
      <svg class="i24"><use href="#bubble"/></svg>
    </aside>
    <div class="stage">
      <div class="mhead"><span>Practice Virtual Classes (14)</span><i class="bar"></i><span class="rec"></span><span>09:53</span>
        <div class="mright"><svg class="wifi"><use href="#wifi"/></svg><svg class="i18"><use href="#dots"/></svg></div></div>
      <div class="talkers"><span class="pill"><svg class="i14"><use href="#mic"/></svg>Jason Lo</span><span class="pill off"><i></i>Ersan Cam</span></div>
      <button class="full" aria-label="Full screen"><svg class="i16"><use href="#expand"/></svg></button>
      <div class="screen">

        <div class="scene">
          <div class="sctitle"><svg class="i12"><use href="#min"/></svg><svg class="i12"><use href="#restore"/></svg><svg class="i12"><use href="#x"/></svg></div>
          <div class="scmenu"></div>
          <div class="scbody">
            <div class="sccanvas"><div class="sctool"></div><div class="scpaper"></div></div>
            <div class="inspector">
              <div class="inshead"><label for="insq">Inspector</label><input id="insq" type="text"><svg class="i8 q"><use href="#mag"/></svg><svg class="i8"><use href="#gear"/></svg></div>
              <div class="acc"><svg class="i8"><use href="#tri"/></svg>Properties</div>
              <p class="nosel">No Selection</p>
              <div class="acc"><svg class="i8"><use href="#trirf"/></svg>Layout</div>
              <div class="acc last"><svg class="i8"><use href="#trirf"/></svg>Code</div>
            </div>
          </div>
        </div>

        <div class="gwin">
          <div class="gtabs">
            <div class="gtab"><svg class="i12"><use href="#slidesm"/></svg><span class="fade">COMP 214 Presentation Group Pr</span><svg class="i10"><use href="#xb"/></svg></div>
            <svg class="i12"><use href="#plus"/></svg>
            <div class="winctl w34"><svg class="i10"><use href="#chev"/></svg><svg class="i10"><use href="#min"/></svg><svg class="i10"><use href="#max"/></svg><svg class="i10"><use href="#x"/></svg></div>
          </div>
          <div class="gbar">
            <svg class="i12 dimmer"><use href="#back"/></svg><svg class="i12 dimmer"><use href="#fwd"/></svg><svg class="i12"><use href="#reload"/></svg>
            <div class="gurl"><svg class="i10"><use href="#lock"/></svg><span><b>docs.google.com</b>/presentation/d/191yym9nLJFMCqk9AToOlwb8opKvZWx_v/edit#slid...</span><svg class="i12"><use href="#share"/></svg><svg class="i12"><use href="#star"/></svg></div>
            <svg class="i12"><use href="#hand"/></svg><svg class="i12 dimmer"><use href="#person"/></svg><svg class="i12"><use href="#puzzle"/></svg><svg class="i12"><use href="#panel"/></svg><span class="gj">J</span><svg class="i12"><use href="#dots"/></svg>
          </div>
          <nav class="gmarks">
            <a href="#"><svg class="i12"><use href="#yt"/></svg></a><a href="#"><svg class="i12"><use href="#reddit"/></svg></a><a href="#"><svg class="i12"><use href="#yt"/></svg></a>
            <a href="#"><svg class="i12"><use href="#cloud"/></svg>Files - OneDrive</a>
            <a href="#"><svg class="i12"><use href="#dev"/></svg>DevDocs API Docu...</a>
            <a href="#"><svg class="i10"><use href="#fold"/></svg>Centennial College</a>
            <a href="#"><svg class="i10"><use href="#fold"/></svg>Recipes</a>
            <a href="#"><svg class="i10"><use href="#slash"/></svg>Cyclic - Full Stack S...</a>
            <a class="push" href="#">»</a><i class="gsep"></i>
            <a href="#"><svg class="i10"><use href="#fold"/></svg>Other bookmarks</a>
          </nav>
          <div class="dhead">
            <svg class="dlogo"><use href="#slidesf"/></svg>
            <div class="dname"><div class="dt"><span>COMP 214 Presentation Group Pro...</span><em>.PPTX</em><svg class="i12"><use href="#star"/></svg></div>
              <nav class="dmenu"><a href="#">File</a><a href="#">Edit</a><a href="#">View</a><a href="#">Insert</a><a href="#">Format</a><a href="#">Slide</a><a href="#">Arrange</a><a href="#">Tools</a><a href="#">He</a></nav></div>
            <div class="dacts"><button class="rnd" aria-label="Activity"><svg class="i14"><use href="#activity"/></svg></button><svg class="i16"><use href="#comment"/></svg>
              <button class="meet" aria-label="Meet"><svg class="i18"><use href="#meet"/></svg><svg class="i8"><use href="#tri"/></svg></button>
              <div class="sshow"><button><svg class="i12"><use href="#play"/></svg>Slideshow</button><button aria-label="Slideshow options"><svg class="i8"><use href="#tri"/></svg></button></div>
              <button class="shr"><svg class="i12"><use href="#shareman"/></svg>Share</button><span class="bigj">J</span></div>
          </div>
          <div class="dtools">
            <span class="grp"><svg class="i12"><use href="#plus"/></svg><svg class="i8"><use href="#tri"/></svg></span>
            <svg class="i12"><use href="#undo"/></svg><svg class="i12"><use href="#redo"/></svg><svg class="i12"><use href="#print"/></svg><svg class="i12 pale"><use href="#roller"/></svg><i></i>
            <svg class="i12"><use href="#mag"/></svg><svg class="i8"><use href="#tri"/></svg><i></i>
            <span class="sel"><svg class="i12"><use href="#arrow"/></svg></span><svg class="i14"><use href="#tbox"/></svg><svg class="i12"><use href="#img"/></svg><svg class="i8"><use href="#tri"/></svg><svg class="i14"><use href="#shape"/></svg><svg class="i12"><use href="#line"/></svg><svg class="i8"><use href="#tri"/></svg><i></i>
            <svg class="i12"><use href="#addc"/></svg><i></i><span>Background</span><i></i><span>Layout</span>
          </div>
          <div class="dmain">
            <div class="film">
              <ol>
                <li><b>1</b><svg class="th" viewBox="0 0 114 67"><path d="M2 2h110v37H60l-3 2-3-2H2z" fill="#fa3764"/><text x="57" y="31" font-size="7" font-weight="700" fill="#fff">COMP 214 - HR App Project</text><text x="57" y="50" font-size="4" fill="#666">Amina Aidarus, Jason Lo, Elif B. Canatan</text><path d="M6 62h88M100 62h6" stroke="#ccc"/></svg></li>
                <li><b>2</b><svg class="th" viewBox="0 0 114 67"><text x="26" y="14" font-size="4" fill="#777">Languages-Tools-API's</text><path d="M4 38h106" stroke="#ccc"/><circle cx="13" cy="38" r="8" fill="#6a48c0"/><circle cx="46" cy="35" r="17" fill="#a334b8"/><circle cx="80" cy="38" r="9" fill="#6a48c0"/><circle cx="101" cy="38" r="8" fill="#6a48c0"/><rect x="41" y="28" width="10" height="13" rx="2" fill="#cfd8dc"/><circle cx="50" cy="39" r="3" fill="#3b7"/><circle cx="102" cy="39" r="4" fill="#f4512c"/><text x="80" y="40" font-size="5" font-weight="700" fill="#111">Maven</text><path d="M6 62h88M100 62h6" stroke="#ccc"/></svg></li>
                <li><b>3</b><svg class="th" viewBox="0 0 114 67"><path d="M2 22h110v24H2z" fill="#fa3764"/><text x="57" y="37" font-size="5" font-weight="700" fill="#fff">Graphic User Interface (GUI)</text><path d="M6 62h88M100 62h6" stroke="#ccc"/></svg></li>
                <li><b>4</b><svg class="th" viewBox="0 0 114 67"><text x="55" y="15" font-size="4" font-weight="700" fill="#222">HR System Main Menu</text><path d="M34 13h-6v16M55 17v12M78 13h6v16" fill="none" stroke="#aaa"/><g font-size="4" font-weight="700" fill="#222"><text x="30" y="36">Employees</text><text x="56" y="36">Jobs</text><text x="88" y="36">Departments</text></g><path d="M21 40h18M21 46h16M21 53h15M51 40h13M51 46h14M51 53h13M79 40h16M79 46h13" stroke="#aaa" stroke-width="2"/><path d="M6 62h88M100 62h6" stroke="#ccc"/></svg></li>
                <li><b>5</b><svg class="th" viewBox="0 0 114 67"><text x="15" y="18" font-size="4" fill="#555">The system</text><path d="M7 25h24M7 28h31M7 31h28" stroke="#ccc"/><rect x="49" y="11" width="58" height="36" rx="2" fill="#2a2a2a"/><rect x="53" y="15" width="50" height="28" fill="#eef0f4"/><path d="M45 47h66l-4 3H49z" fill="#c8cacc"/><path d="M68 24h20" stroke="#e55" stroke-width="2"/><path d="M73 29h10M75 32h6M73 35h10" stroke="#56c"/><path d="M6 62h88M100 62h6" stroke="#ccc"/></svg></li>
                <li class="cur"><b>6</b><svg class="th" viewBox="0 0 114 67"><text x="20" y="18" font-size="4" fill="#555">GUI Screenshots</text><path d="M6 25h37v30H6zM46 25h28v30H46zM76 25h33v30H76z" fill="#eee"/><path d="M9 28h12M9 31h30M9 35h28M9 38h28M9 43h26M9 47h30M49 28h8M49 33h20M49 38h18M49 44h21M49 50h20M79 28h15M79 32h26M79 37h24M79 43h20M79 50h26" stroke="#aaa"/><path d="M6 62h88M100 62h6" stroke="#ccc"/></svg></li>
                <li><b>7</b><svg class="th" viewBox="0 0 114 67"><path d="M2 22h110v24H2z" fill="#fa3764"/><text x="57" y="37" font-size="5" font-weight="700" fill="#fff">Thank you!</text><path d="M6 62h88M100 62h6" stroke="#ccc"/></svg></li>
              </ol>
              <div class="views"><span class="on"><svg class="i12"><use href="#list"/></svg></span><span><svg class="i12"><use href="#grid"/></svg></span><span><svg class="i12"><use href="#chevl"/></svg></span></div>
            </div>
            <div class="vruler"><div class="vwhite"><span>1</span><span>2</span><span>3</span><span>4</span><span>5</span></div></div>
            <div class="work">
              <div class="hruler"><span>1</span><span>2</span><span>3</span><span>4</span><span>5</span></div>
              <div class="slide">
                <h2>GUI Screenshots</h2><div class="dash"><i></i><i></i><i></i></div>
                <div class="shots">
                  <svg class="shot" viewBox="0 0 160 132"><path d="M0 0h160v132H0z" fill="#f1f1f1"/><path d="M0 0h160v7H0z" fill="#fff"/><text x="3" y="18" font-size="7">EMPLOYEES</text><rect x="139" y="9" width="17" height="6" fill="#a9cfe0"/><text x="5" y="28" font-size="4">Update Employee Details</text><path d="M24 30h74v4H24zM105 30h48v4h-48zM107 67h48v4h-48zM107 121h48v5h-48zM22 103h27v4H22zM74 103h27v4H74zM124 103h29v4h-29z" fill="#d5d5d5"/><path d="M21 41h27v4H21zM74 41h27v4H74zM124 41h29v4h-29zM21 48h27v4H21zM74 48h27v4H74zM124 48h29v4h-29zM21 55h27v4H21zM74 55h27v4H74zM124 55h29v4h-29zM21 62h27v4H21zM22 87h27v4H22zM74 87h27v4H74zM124 87h29v4h-29zM22 95h27v4H22zM74 95h27v4H74zM124 95h29v4h-29z" fill="#fff"/><path d="M9 73h148" stroke="#888"/><path d="M4 32h17M4 43h12M4 50h8M4 57h10M4 64h11M53 43h12M53 50h8M53 57h18M105 43h7M105 50h14M105 57h14M60 37h14M6 89h12M9 97h8M7 105h9M55 89h12M55 97h8M55 105h10M106 89h7M106 97h12M106 105h13" stroke="#bbb"/><text x="40" y="82" font-size="4" font-weight="700">Employee Hiring Form</text></svg>
                  <svg class="shot" viewBox="0 0 160 138"><path d="M0 0h160v138H0z" fill="#f1f1f1"/><path d="M0 0h160v7H0z" fill="#fff"/><g font-size="4"><text x="3" y="18" font-size="7">JOBS</text><text x="5" y="28">Lookup Job Title</text><text x="5" y="59">Modify Existing Job</text><text x="5" y="108">Create New Job</text></g><path d="M5 38h30v4H5zM30 74h30v4H30zM30 80h30v4H30zM30 86h30v4H30zM30 112h30v4H30zM30 118h30v4H30zM30 124h30v4H30zM30 130h30v4H30z" fill="#fff"/><path d="M36 38h30v4H36zM30 61h30v4H30z" fill="#d5d5d5"/><path d="M5 50h60M5 98h60" stroke="#888"/></svg>
                </div>
                <hr>
              </div>
              <div class="grab"><i></i><i></i><i></i></div>
              <div class="notes">Click to add speaker notes</div>
            </div>
            <div class="dright"></div>
          </div>
        </div>

        <form class="hello">
          <div class="hbar"><svg class="i12" viewBox="0 0 12 12"><path d="M0 0h12v12H0z" fill="#cfe3e3"/><path d="M2 3h4v7H2z" fill="#3b8d8f"/></svg><span>Hello!</span><div class="winctl w34"><svg class="i12"><use href="#min"/></svg><svg class="i12"><use href="#max"/></svg><svg class="i12"><use href="#x"/></svg></div></div>
          <div class="htop"><h1>EMPLOYEES</h1><button type="button">Back to Menu</button></div>
          <h2>Update Employee Details</h2>
          <div class="hsel"><label for="emp">Select Employee:</label><span class="dd"><select id="emp"><option>test, test</option></select></span><button type="button">Populate Existing Details</button></div>
          <h3>New Details</h3>
          <div class="fgrid one">
            <label for="a1">First Name:</label><input id="a1" value="test"><label for="a2">Last Name:</label><input id="a2" value="test"><label for="a3">Email:</label><span class="foc"><input id="a3" value="testtesttest"><svg class="ibeam" viewBox="0 0 6 14"><path d="M0 1h2l1 1 1-1h2M3 1v12M0 13h2l1-1 1 1h2" fill="none" stroke="#333"/></svg></span>
            <label for="a4">Phone:</label><input id="a4" value="123.4567890"><label for="a5">Salary:</label><input id="a5" value="5000"><label for="a6">Commission:</label><input id="a6" value="0">
            <label for="a7">Job Title:</label><input id="a7" value="Purchasing Clerk"><label for="a8">Manager Name:</label><input id="a8" value="Steven, Markle"><label for="a9">Department:</label><input id="a9" value="Shareholder Services">
            <label for="a10">Hire Date:</label><input id="a10" value="2022-12-08">
          </div>
          <button class="sub" type="button">Submit</button>
          <hr>
          <h4>Employee Hiring Form</h4>
          <div class="fgrid two">
            <label for="b1">First Name:</label><input id="b1"><label for="b2">Last Name:</label><input id="b2"><label for="b3">Email:</label><input id="b3">
            <label for="b4">Phone:</label><input id="b4"><label for="b5">Salary:</label><input id="b5"><label for="b6">Hire Date:</label><input id="b6" value="2022/12/08">
            <label for="b7">Job Title :</label><span class="dd"><select id="b7"></select></span><label for="b8">Manager:</label><span class="dd"><select id="b8"></select></span><label for="b9">Department:</label><span class="dd"><select id="b9"></select></span>
          </div>
          <button class="sub low" type="button">Submit</button>
        </form>

        <div class="sharing"><i class="pause"></i><span>vc-bongo-ca-3-96-215-142.youseeu.com is sharing your screen.</span><button>Stop sharing</button><a href="#">Hide</a></div>

        <footer class="sbar">
          <svg class="i12"><use href="#win"/></svg><svg class="i14"><use href="#wsearch"/></svg><svg class="i14"><use href="#circle"/></svg><svg class="i14"><use href="#tview"/></svg>
          <span class="run"><svg class="i14"><use href="#expl"/></svg></span><span class="run"><svg class="i14"><use href="#chrome"/></svg></span><span class="run"><svg class="i12"><use href="#vscode"/></svg></span><span class="run"><svg class="i12"><use href="#ij"/></svg></span><span class="run"><svg class="i12"><use href="#bblue"/></svg></span><span class="run"><svg class="i12"><use href="#sheet"/></svg></span><span class="run act"><svg class="i12"><use href="#java"/></svg></span><span class="run"><svg class="i14"><use href="#orange"/></svg></span>
          <div class="stray"><svg class="i18"><use href="#weather"/></svg><span>-1°C</span><span>Mostly cloudy</span><svg class="i10"><use href="#chevup"/></svg><svg class="i14"><use href="#net"/></svg><svg class="i12"><use href="#cloudx"/></svg><time>8:48 PM</time><svg class="i14"><use href="#note"/></svg></div>
        </footer>
      </div>
      <div class="mctl"><button class="blue" aria-label="Audio"><svg class="i20"><use href="#head"/></svg></button><button aria-label="Share webcam"><svg class="i20"><use href="#nocam"/></svg></button></div>
    </div>
  </div>

  <footer class="task">
    <span><svg class="i16"><use href="#win"/></svg></span><span><svg class="i16"><use href="#wsearch"/></svg></span><span><svg class="i20"><use href="#tview"/></svg></span><span><svg class="i24"><use href="#edge"/></svg></span><span><svg class="i24"><use href="#ie"/></svg></span><span class="act"><svg class="i24"><use href="#chromeji"/></svg></span><span><svg class="i24"><use href="#expl"/></svg></span><span><svg class="i24"><use href="#store"/></svg></span><span><svg class="i24"><use href="#sync"/></svg></span><span><svg class="i24"><use href="#mail"/></svg></span><span><svg class="i24"><use href="#cmd"/></svg></span><span><svg class="i24"><use href="#gears"/></svg></span><span><svg class="i24"><use href="#gitb"/></svg></span><span class="run"><svg class="i24 vsp"><use href="#vs"/></svg></span><span class="run"><svg class="i24"><use href="#photo"/></svg></span>
    <time>8:49 PM<br>12/8/2022</time>
  </footer>
</section>

<section class="desk vs" aria-label="Visual Studio desktop">
  <header class="vmenu">
    <svg class="i24 vlogo"><use href="#vslogo"/></svg>
    <nav><a href="#">File</a><a href="#">Edit</a><a href="#">View</a><a href="#">Git</a><a href="#">Project</a><a href="#">Build</a><a href="#">Debug</a><a href="#">Test</a><a href="#">Analyze</a><a href="#">Tools</a><a href="#">Extensions</a><a href="#">Window</a><a href="#">Help</a></nav>
    <div class="vsearch"><input type="text" aria-label="Search" placeholder="Search (Ctrl+Q)"><svg class="i16"><use href="#magr"/></svg></div>
    <span class="vtitle">Employee form</span>
    <span class="hp">HP</span>
    <div class="winctl w58"><svg class="i16"><use href="#min"/></svg><svg class="i16"><use href="#restore"/></svg><svg class="i16"><use href="#x"/></svg></div>
  </header>
  <div class="vtool">
    <i class="grip"></i>
    <span class="s27 off"><svg class="i18"><use href="#cback"/></svg></span><span class="s15 off2"><svg class="i10"><use href="#tri"/></svg></span><span class="s24 off"><svg class="i18"><use href="#cfwd"/></svg></span><i class="sep"></i>
    <span class="s24"><svg class="i20"><use href="#newp"/></svg></span><span class="s15"><svg class="i10"><use href="#tri"/></svg></span><span class="s27"><svg class="i20"><use href="#open"/></svg></span><span class="s27"><svg class="i18"><use href="#save"/></svg></span><span class="s27"><svg class="i18"><use href="#saveall"/></svg></span><i class="sep"></i>
    <span class="s27 off"><svg class="i16"><use href="#vundo"/></svg></span><span class="s15 off2"><svg class="i10"><use href="#tri"/></svg></span><span class="s27 off"><svg class="i16"><use href="#vredo"/></svg></span><span class="s15 off2"><svg class="i10"><use href="#tri"/></svg></span><i class="sep"></i>
    <span class="combo cfg"><select aria-label="Configuration"><option>Debug</option></select></span><span class="combo plat"><select aria-label="Platform"><option>Any CPU</option></select></span>
    <button class="start"><svg class="i18"><use href="#run"/></svg>Employee form<svg class="i10"><use href="#tri"/></svg></button>
    <span class="s24"><svg class="i18"><use href="#runo"/></svg></span><span class="s27"><svg class="i20"><use href="#fire"/></svg></span><span class="s15"><svg class="i10"><use href="#tri"/></svg></span><i class="sep"></i>
    <span class="s24"><svg class="i20"><use href="#foldsearch"/></svg></span><i class="sep"></i><span class="s24"><svg class="i20"><use href="#winhome"/></svg></span><span class="s24"><svg class="i10"><use href="#over"/></svg></span>
    <i class="grip slim"></i>
    <span class="s27 off"><svg class="i16"><use href="#al1"/></svg></span><i class="sep"></i>
    <span class="s27 off"><svg class="i16"><use href="#al2"/></svg></span><span class="s27 off"><svg class="i16"><use href="#al1"/></svg></span><span class="s27 off"><svg class="i16"><use href="#al3"/></svg></span><span class="s27 off"><svg class="i16"><use href="#al4"/></svg></span><span class="s27 off"><svg class="i16"><use href="#al5"/></svg></span><span class="s27 off"><svg class="i16"><use href="#al6"/></svg></span><i class="sep"></i>
    <span class="s27 off"><svg class="i18"><use href="#sp1"/></svg></span><span class="s27 off"><svg class="i18"><use href="#sp2"/></svg></span><span class="s27 off"><svg class="i18"><use href="#sp3"/></svg></span><span class="s27 off"><svg class="i18"><use href="#sp4"/></svg></span><i class="sep"></i>
    <span class="s27 off"><svg class="i16"><use href="#al5"/></svg></span><span class="s24 off"><svg class="i16"><use href="#al1"/></svg></span><i class="sep"></i>
    <span class="s27 off"><svg class="i18"><use href="#fr1"/></svg></span><span class="s27 off"><svg class="i18"><use href="#fr2"/></svg></span><span class="s24"><svg class="i10"><use href="#over"/></svg></span>
    <button class="live"><svg class="i18"><use href="#share"/></svg>Live Share</button><svg class="i20 fbp"><use href="#fbp"/></svg>
  </div>
  <div class="vmain">
    <aside class="vside"><span>Toolbox</span><span>Data Sources</span></aside>
    <div class="vcenter">
      <div class="dtabs">
        <span class="dtab on">Form1.cs [Design]<svg class="i12"><use href="#pinh"/></svg><svg class="i14"><use href="#x"/></svg></span>
        <span class="dtab pre">Form1.Designer.cs<svg class="i14"><use href="#keep"/></svg><svg class="i14"><use href="#x"/></svg></span>
        <svg class="i14"><use href="#tri"/></svg><svg class="i14"><use href="#gear"/></svg>
      </div>
      <div class="design">
        <div class="frame">
          <div class="form1"><div class="ftitle"><svg class="i16"><use href="#winf"/></svg>Form1<div class="fbtns"><i class="fmin"></i><i class="fmax"></i><i class="fx"><svg class="i16"><use href="#xb"/></svg></i></div></div><div class="fbody"></div></div>
          <b class="h hs"></b><b class="h he"></b><b class="h hc"></b>
        </div>
      </div>
      <div class="output">
        <div class="phead blue">Output<span><svg class="i14"><use href="#tri"/></svg><svg class="i14"><use href="#pinv"/></svg><svg class="i14"><use href="#x"/></svg></span></div>
        <div class="otool"><label for="osrc">Show output from:</label><span class="combo"><select id="osrc"></select></span><i class="sep"></i><span class="s24 off"><svg class="i16"><use href="#out1"/></svg></span><i class="sep"></i><span class="s24 off"><svg class="i16"><use href="#out2"/></svg></span><span class="s24 off"><svg class="i16"><use href="#out3"/></svg></span><i class="sep"></i><span class="s24 off"><svg class="i16"><use href="#out4"/></svg></span><i class="sep"></i><span class="s24"><svg class="i18"><use href="#wrap"/></svg></span></div>
      </div>
    </div>
    <div class="vright">
      <div class="solx">
        <div class="phead gold">Solution Explorer<span><svg class="i14"><use href="#tri"/></svg><svg class="i14"><use href="#pinv"/></svg><svg class="i14"><use href="#x"/></svg></span></div>
        <div class="stool"><span class="s27 off"><svg class="i16"><use href="#cback"/></svg></span><span class="s27 off"><svg class="i16"><use href="#cfwd"/></svg></span><span class="s27"><svg class="i18"><use href="#home"/></svg></span><span class="s27"><svg class="i20"><use href="#vsdoc"/></svg></span><i class="sep"></i><span class="s27"><svg class="i18"><use href="#clock"/></svg></span><span class="s15"><svg class="i10"><use href="#tri"/></svg></span><span class="s27"><svg class="i18"><use href="#swap"/></svg></span><span class="s27"><svg class="i20"><use href="#coll"/></svg></span><span class="s27"><svg class="i20"><use href="#files"/></svg></span><i class="sep"></i><span class="s27"><svg class="i18"><use href="#wrench"/></svg></span><span class="s27 pick"><svg class="i20"><use href="#prev"/></svg></span></div>
        <div class="ssearch"><input type="text" aria-label="Search Solution Explorer" placeholder="Search Solution Explorer (Ctrl+;)"><svg class="i18"><use href="#magr"/></svg><span class="s15"><svg class="i10"><use href="#tri"/></svg></span></div>
        <ul class="tree">
          <li class="l0"><svg class="i18"><use href="#sln"/></svg>Solution 'Employee form' ▯(1 of 1 project)</li>
          <li class="l1"><svg class="i14"><use href="#tric"/></svg><svg class="i18"><use href="#csproj"/></svg><b>Employee form</b></li>
          <li class="l2"><svg class="i14"><use href="#trir"/></svg><svg class="i20"><use href="#deps"/></svg>Dependencies</li>
          <li class="l2 cur"><svg class="i14"><use href="#tric"/></svg><svg class="i18"><use href="#formi"/></svg>Form1.cs</li>
          <li class="l3"><svg class="i14"><use href="#trir"/></svg><svg class="i18"><use href="#cs"/></svg>Form1.Designer.cs</li>
          <li class="l3"><svg class="i14"></svg><svg class="i18"><use href="#resx"/></svg>Form1.resx</li>
          <li class="l2"><svg class="i14"><use href="#trir"/></svg><svg class="i18"><use href="#cs"/></svg>Program.cs</li>
        </ul>
      </div>
      <div class="stabs"><span class="on">Solution Explorer</span><span>Git Changes</span></div>
      <div class="props">
        <div class="phead blue">Properties<span><svg class="i14"><use href="#tri"/></svg><svg class="i14"><use href="#pinv"/></svg><svg class="i14"><use href="#x"/></svg></span></div>
        <div class="pobj"><b>Form1.cs</b> File Properties<svg class="i10"><use href="#tri"/></svg></div>
        <div class="ptool"><span class="pick"><svg class="i20"><use href="#cat"/></svg></span><span class="s30"><svg class="i20"><use href="#az"/></svg></span><i class="sep"></i><span class="s27 gray"><svg class="i20"><use href="#wrench"/></svg></span></div>
        <table>
          <colgroup><col class="c1"><col class="c2"><col></colgroup>
          <tbody>
          <tr class="cat"><th><svg class="i12"><use href="#boxm"/></svg></th><td colspan="2">Advanced</td></tr>
          <tr class="curp"><th></th><td>Build Action</td><td>C# compiler</td></tr>
          <tr><th></th><td>Copy to Output Directory</td><td>Do not copy</td></tr>
          <tr><th></th><td>Custom Tool</td><td></td></tr>
          <tr><th></th><td>Custom Tool Namespace</td><td></td></tr>
          <tr class="cat"><th><svg class="i12"><use href="#boxm"/></svg></th><td colspan="2">Misc</td></tr>
          <tr class="ro"><th></th><td>File Name</td><td>Form1.cs</td></tr>
          <tr class="ro"><th></th><td>Full Path</td><td>C:\Users\USER\source\repos\Employee fo</td></tr>
          </tbody>
        </table>
        <div class="pdesc"><b>Build Action</b><p>How the file relates to the build and deployment processes.</p></div>
      </div>
    </div>
  </div>
  <footer class="vstat"><svg class="i20"><use href="#fb"/></svg>Ready<button class="src"><svg class="i16"><use href="#up"/></svg>Add to Source Control<svg class="i12"><use href="#triup"/></svg></button><button class="repo"><svg class="i18"><use href="#gitd"/></svg>Select Repository<svg class="i12"><use href="#triup"/></svg></button><span class="bell"><svg class="i20"><use href="#bell"/></svg><em>2</em></span></footer>
  <footer class="task big">
    <span><svg class="i20"><use href="#win"/></svg></span><span><svg class="i20"><use href="#wsearch"/></svg></span><span><svg class="i24"><use href="#tview"/></svg></span><span><svg class="i30"><use href="#edge"/></svg></span><span><svg class="i30"><use href="#ie"/></svg></span><span class="act"><svg class="i30"><use href="#chromeji"/></svg></span><span><svg class="i30"><use href="#expl"/></svg></span><span><svg class="i30"><use href="#store"/></svg></span><span><svg class="i30"><use href="#sync"/></svg></span><span><svg class="i30"><use href="#mail"/></svg></span><span><svg class="i30"><use href="#cmd"/></svg></span><span><svg class="i30"><use href="#gears"/></svg></span><span><svg class="i30"><use href="#gitb"/></svg></span><span class="run"><svg class="i30 vsp"><use href="#vs"/></svg></span><span class="run"><svg class="i30"><use href="#photo"/></svg></span>
    <div class="tray"><svg class="i20 ppl"><use href="#pplo"/></svg><svg class="i16"><use href="#chevup"/></svg><svg class="i20"><use href="#batt"/></svg><svg class="i16"><use href="#wf"/></svg><svg class="i20"><use href="#snd"/></svg><span>ENG</span></div>
    <time>8:49 PM<br>12/8/2022</time>
    <div class="noti"><svg class="i20"><use href="#note"/></svg><em>2</em></div>
  </footer>
</section>
</main>
</body>
</html>
```
FILE: styles.css
```css
* { box-sizing: border-box; }
body { margin: 0; background: #000; font-family: "Open Sans", "Noto Sans CJK KR", sans-serif; font-size: 14px; line-height: 18px; color: #1e1e1e; white-space: nowrap; }
h1, h2, h3, h4, p, ul, ol { margin: 0; padding: 0; font-weight: 400; }
li { list-style: none; }
a { color: inherit; text-decoration: none; }
button, input, select { font: inherit; color: inherit; margin: 0; padding: 0; border: 0; background: none; border-radius: 0; outline: 0; }
select { appearance: none; width: 100%; height: 100%; }
em, i { font-style: normal; }
svg { flex: none; display: block; overflow: visible; }
.sprite { position: absolute; width: 0; height: 0; }
.i8 { width: 8px; height: 8px; }
.i10 { width: 10px; height: 10px; }
.i12 { width: 12px; height: 12px; }
.i14 { width: 14px; height: 14px; }
.i16 { width: 16px; height: 16px; }
.i18 { width: 18px; height: 18px; }
.i20 { width: 20px; height: 20px; }
.i24 { width: 24px; height: 24px; }
.i30 { width: 30px; height: 30px; }
.fade { -webkit-mask-image: linear-gradient(90deg, #000 85%, transparent); mask-image: linear-gradient(90deg, #000 85%, transparent); }

.desktops { display: grid; grid-template-columns: minmax(0, 1fr) minmax(0, 1fr); min-height: 100vh; }
.desk { display: flex; flex-direction: column; min-width: 0; overflow: hidden; }
.winctl { display: flex; margin-left: auto; }
.winctl svg { margin: 0 16px; }
.w34 svg { margin: 0 12px; }
.w58 svg { margin: 0 21px; }

/* browser */
.left { font-size: 11px; line-height: 16px; color: #3c4043; }
.tabstrip { display: flex; align-items: center; height: 34px; background: #dee1e6; padding-left: 8px; }
.tab { display: flex; align-items: center; gap: 8px; flex: 0 1 239px; min-width: 0; height: 34px; padding: 0 8px 0 12px; position: relative; }
.tab::after { content: ""; position: absolute; right: 0; top: 7px; width: 1px; height: 20px; background: #8a8d91; }
.tab.last::after, .tab.active::after { display: none; }
.tab.active { background: #fff; border-radius: 8px 8px 0 0; padding-left: 12px; }
.tab .t { flex: 1; overflow: hidden; }
.newtab { margin-left: 16px; }
.toolbar { display: flex; align-items: center; gap: 16px; height: 36px; padding: 0 16px 0 14px; background: #fff; color: #5f6368; }
.dim { color: #b6b8bb; }
.omni { flex: 1; display: flex; align-items: center; gap: 16px; height: 28px; border-radius: 14px; background: #f1f3f4; padding: 0 10px; font-size: 13px; }
.omni .url { flex: 1; color: #6b6f73; margin-left: -6px; }
.omni b { font-weight: 400; color: #202124; }
.ava { width: 22px; height: 22px; border-radius: 50%; background: #f4511e; color: #fff; text-align: center; line-height: 22px; }
.bookmarks { display: flex; align-items: center; gap: 16px; height: 33px; padding: 0 16px 0 14px; background: #fff; border-bottom: 1px solid #d0d3d6; }
.bookmarks a { display: flex; align-items: center; gap: 8px; }
.bookmarks .long { flex: 0 0 135px; }
.bookmarks .more { margin-left: auto; font-size: 16px; }

/* virtual classroom */
.meeting { flex: 1; display: flex; background: #0c141b; color: #fff; }
.mside { flex: 0 0 59px; padding: 24px 17px; display: flex; flex-direction: column; gap: 26px; }
.users { width: 26px; height: 20px; }
.stage { flex: 1; min-width: 0; display: flex; flex-direction: column; align-items: center; position: relative; }
.mhead { width: 100%; height: 54px; display: flex; align-items: center; justify-content: center; gap: 14px; position: relative; font: 14px "Liberation Sans", sans-serif; }
.mhead .bar { width: 1px; height: 14px; background: #4e5a66; }
.rec { width: 20px; height: 20px; border: 1px solid #f0251b; border-radius: 50%; background: radial-gradient(#e22 3px, transparent 4px); }
.mright { position: absolute; right: 15px; display: flex; gap: 26px; align-items: center; }
.wifi { width: 20px; height: 16px; }
.talkers { align-self: flex-start; display: flex; gap: 5px; height: 18px; padding-left: 6px; font: 14px "Liberation Sans", sans-serif; }
.pill { display: flex; align-items: center; gap: 7px; height: 22px; padding: 0 13px 0 5px; border-radius: 11px; background: #4b148c; }
.pill.off { background: #2b1354; color: #8c8397; }
.pill i { width: 14px; height: 14px; border-radius: 50%; background: #074747; }
.full { position: absolute; right: 0; top: 72px; padding: 4px 2px; width: 23px; height: 24px; background: #050a0e; }
.screen { flex: 1; aspect-ratio: 1423 / 801; min-height: 801px; position: relative; overflow: hidden; background: #4f4f4f; font-size: 9px; line-height: 12px; color: #3c3c3c; }
.mctl { display: flex; gap: 21px; align-items: center; height: 64px; margin-left: 12px; }
.mctl button { width: 42px; height: 42px; border-radius: 50%; border: 3px solid #fff; display: grid; place-items: center; }
.mctl .blue { background: #2579ca; border-color: #2579ca; }

/* scene builder behind the other windows */
.scene { position: absolute; inset: 0 0 23px 0; display: flex; flex-direction: column; font-size: 9px; }
.sctitle { height: 17px; background: #fff; display: flex; justify-content: flex-end; align-items: center; gap: 22px; padding-right: 12px; color: #999; }
.scmenu { height: 19px; background: linear-gradient(#fafafa, #e4e4e4); border-bottom: 1px solid #aaa; }
.scbody { flex: 1; display: flex; }
.sccanvas { flex: 1; background: #4f4f4f; }
.sctool { height: 24px; background: linear-gradient(#fafafa, #dcdcdc); }
.scpaper { height: 109px; width: 1029px; margin-top: 500px; background: #f4f4f4; }
.inspector { flex: 0 0 208px; border-left: 1px solid #999; background: #f2f2f2; display: flex; flex-direction: column; }
.inshead { height: 24px; display: flex; align-items: center; gap: 4px; padding: 0 8px; background: linear-gradient(#f8f8f8, #dedede); position: relative; }
.inshead input { flex: 1; height: 16px; margin-left: 16px; border: 1px solid #d2d2d2; border-radius: 8px; background: #ededed; }
.inshead .q { margin-left: -20px; margin-right: 8px; }
.acc { display: flex; align-items: center; justify-content: space-between; height: 17px; padding: 0 5px; background: #ccc; border-top: 1px solid #aaa; }
.acc.last { height: 15px; }
.nosel { flex: 1; padding: 5px 7px; color: #8a8a8a; font-size: 8px; }

/* shared chrome window */
.gwin { position: absolute; left: 0; top: 0; width: 711px; bottom: 23px; display: flex; flex-direction: column; background: #3a3b3d; color: #ddd; overflow: hidden; box-shadow: 0 0 5px #222; }
.gtabs { height: 33px; display: flex; align-items: flex-end; gap: 10px; padding-left: 7px; background: #3f4042; }
.gtab { display: flex; align-items: center; gap: 5px; width: 178px; height: 26px; padding: 0 8px; background: #35363a; border-radius: 6px 6px 0 0; font-size: 9px; }
.gtab span { flex: 1; overflow: hidden; }
.gtabs > svg { margin-bottom: 7px; }
.gtabs .winctl { height: 26px; color: #999; align-self: flex-start; align-items: center; }
.gbar { height: 26px; display: flex; align-items: center; gap: 12px; padding: 0 10px; color: #e8e8e8; }
.dimmer { color: #999; }
.gurl { flex: 1; height: 21px; border-radius: 10px; background: #1f2023; display: flex; align-items: center; gap: 8px; padding: 0 8px; color: #9a9a9a; }
.gurl span { flex: 1; overflow: hidden; }
.gurl b { color: #fff; font-weight: 400; }
.gj { width: 16px; height: 16px; margin: 0 -2px; border-radius: 50%; background: #0b4b44; text-align: center; line-height: 16px; font-size: 8px; }
.gmarks { height: 24px; display: flex; align-items: center; gap: 12px; padding: 0 8px 4px 10px; font-size: 8px; }
.gmarks a { display: flex; align-items: center; gap: 6px; }
.gmarks .push { margin-left: auto; font-size: 12px; }
.gsep { width: 1px; height: 12px; background: #666; }
.dhead { height: 47px; display: flex; align-items: center; background: #fff; color: #3c4043; padding: 0 15px 0 18px; font: 11px/14px Roboto, sans-serif; }
.dlogo { width: 20px; height: 28px; }
.dname { flex: 1; min-width: 0; height: 100%; margin-left: 16px; padding-top: 7px; border-right: 1px solid #dadce0; overflow: hidden; }
.dt { display: flex; align-items: center; gap: 12px; height: 18px; font-size: 13px; color: #202124; }
.dt em { background: #fbbc04; border-radius: 2px; font-size: 10px; padding: 1px 4px; }
.dmenu { display: flex; gap: 10px; padding-top: 3px; font-size: 11px; }
.dacts { display: flex; align-items: center; gap: 7px; padding-left: 6px; font-size: 12px; }
.rnd { width: 26px; height: 26px; border: 1px solid #ccc; border-radius: 50%; display: grid; place-items: center; color: #777; margin-right: 6px; }
.meet { display: flex; align-items: center; justify-content: center; gap: 3px; width: 40px; height: 27px; border: 1px solid #dadce0; border-radius: 14px; color: #1a73e8; margin-left: 8px; }
.sshow { display: flex; height: 26px; border: 1px solid #dadce0; border-radius: 3px; }
.sshow button { display: flex; align-items: center; gap: 7px; padding: 0 3px 0 8px; width: 90px; }
.sshow button + button { width: 15px; padding: 0 3px; border-left: 1px solid #dadce0; }
.shr { display: flex; align-items: center; justify-content: center; gap: 4px; width: 67px; height: 27px; background: #fbb605; border-radius: 3px; color: #333; }
.bigj { width: 24px; height: 24px; border-radius: 50%; background: #0b4b44; color: #fff; text-align: center; line-height: 24px; margin-left: 7px; }
.dtools { height: 31px; display: flex; align-items: center; gap: 8px; padding: 0 18px; background: #fff; color: #5f6368; border-top: 1px solid #dadce0; border-bottom: 1px solid #dadce0; font: 10px Roboto, sans-serif; }
.dtools .i8 { margin: 0 -3px; }
.dtools > i { width: 1px; height: 14px; background: #ddd; }
.grp { display: flex; align-items: center; gap: 7px; height: 20px; padding: 0 6px 0 4px; background: #f1f3f4; }
.sel { display: grid; place-items: center; width: 18px; height: 19px; background: #feefc3; }
.pale { color: #bbb; }
.dmain { flex: 1; display: flex; min-height: 0; background: #fff; color: #444; }
.film { flex: 0 0 163px; display: flex; flex-direction: column; border-right: 1px solid #dadce0; }
.film ol { flex: 1; }
.film li { display: flex; gap: 9px; height: 75px; padding: 4px 0 0 17px; margin-right: 14px; }
.film b { width: 6px; font: 9px/10px "Liberation Sans", sans-serif; color: #777; }
.film .cur { background: #fef6dc; }
.th { width: 114px; height: 67px; border: 1px solid #d5d8dc; border-radius: 3px; background: #fff; font-family: Roboto, sans-serif; text-anchor: middle; overflow: hidden; }
.cur .th { border: 2px solid #f9ab00; }
.views { display: flex; height: 31px; border-top: 1px solid #dadce0; padding-left: 19px; }
.views span { display: grid; place-items: center; width: 35px; border-top: 2px solid transparent; }
.views span + span { margin-left: 34px; }
.views span:last-child { margin-left: 12px; }
.views .on { border-color: #222; color: #222; }
.vruler { flex: 0 0 11px; background: #e8eaed; padding-top: 148px; }
.vwhite { background: #fff; height: 265px; display: flex; flex-direction: column; justify-content: space-between; align-items: center; padding: 40px 0; font-size: 7px; line-height: 8px; color: #777; }
.work { flex: 1; display: flex; flex-direction: column; background: #f8f9fa; min-width: 0; }
.hruler { display: flex; gap: 43px; height: 9px; padding-left: 58px; background: #fff; border-bottom: 1px solid #e0e0e0; font-size: 7px; line-height: 8px; }
.slide { width: 460px; height: 266px; margin: 139px 0 0 13px; padding: 50px 0 0 16px; background: #fff; border: 1px solid #ddd; }
.slide h2 { font: 14px/16px Roboto, sans-serif; margin-left: 5px; color: #444; }
.dash { display: flex; gap: 4px; padding: 7px 0 17px 5px; }
.dash i { width: 8px; height: 2px; background: #999; }
.shots { display: flex; gap: 9px; align-items: flex-start; height: 162px; fill: #555; font-family: "Open Sans", sans-serif; }
.shot { width: 160px; }
.slide hr { border: 0; height: 2px; background: #999; margin: 0; }
.grab { margin-top: auto; height: 7px; display: flex; justify-content: center; align-items: center; gap: 3px; border: 1px solid #ddd; border-width: 1px 0; background: #fff; }
.grab i { width: 3px; height: 3px; background: #ccc; border-radius: 50%; }
.notes { height: 60px; background: #fff; padding: 8px 0 0 2px; font: 11px/14px "Liberation Sans", sans-serif; color: #222; }
.dright { flex: 0 0 41px; border-left: 1px solid #e4e4e4; }

/* JavaFX window */
.hello { position: absolute; left: 425px; top: 126px; width: 635px; height: 519px; background: #f4f4f4; box-shadow: 0 2px 8px #222; font-size: 10px; line-height: 14px; color: #444; }
.hbar { display: flex; align-items: center; gap: 4px; height: 23px; padding-left: 6px; background: #fff; font-size: 9px; color: #333; }
.hbar .w34 svg { margin: 0 11px; }
.htop { display: flex; justify-content: space-between; align-items: flex-start; padding: 8px 18px 0 12px; height: 75px; }
.htop h1 { font-size: 25px; line-height: 40px; color: #2b2b2b; }
.hello button { height: 19px; border: 1px solid #c4c4c4; border-radius: 2px; background: linear-gradient(#ececec, #dadada); font-size: 9px; line-height: 16px; color: #333; }
.htop button { width: 66px; margin-top: 2px; }
.hello h2 { font-size: 17px; line-height: 22px; margin: -12px 0 0 18px; height: 27px; color: #333; }
.hsel { display: grid; grid-template-columns: 81px 297px 28px 191px; align-items: center; padding-left: 13px; height: 19px; }
.hsel button { grid-column: 4; }
.dd { position: relative; display: block; height: 19px; border: 1px solid #c4c4c4; border-radius: 2px; background: linear-gradient(#ececec, #dadada); font-size: 9px; }
.dd select { padding-left: 5px; }
.dd::after { content: ""; position: absolute; right: 5px; top: 7px; border: 3px solid transparent; border-top: 4px solid #444; border-bottom: 0; }
.hello h3 { font-size: 10px; text-decoration: underline; margin: 6px 0 6px 234px; line-height: 14px; }
.fgrid { display: grid; align-items: center; }
.fgrid input { width: 100%; height: 18px; border: 1px solid #d0d0d0; border-radius: 2px; background: #fff; padding-left: 5px; font-size: 9px; }
.foc { position: relative; }
.foc input { display: block; border: 2px solid #2ba6d8; }
.ibeam { position: absolute; right: 34px; top: 1px; width: 5px; height: 14px; }
.one { grid-template-columns: 71px 111px 15px 81px 111px 19px 71px 119px; grid-template-rows: 18px 18px 18px 18px; row-gap: 10px; padding-left: 12px; }
.two { grid-template-columns: 63px 111px 18px 76px 112px 18px 71px 119px; grid-template-rows: 18px 18px 18px; row-gap: 13px; padding-left: 22px; }
.fgrid label:nth-child(6n + 3) { grid-column: 4; }
.fgrid label:nth-child(6n + 5) { grid-column: 7; }
.sub { display: block; width: 192px; margin: -2px 0 0 426px; }
.hello .sub.low { margin: 56px 0 0 423px; }
.hello hr { border: 0; height: 2px; margin: 12px 9px 0 33px; background: #8e9494; }
.hello h4 { font: 700 16px/20px "Liberation Serif", serif; margin: 13px 0 15px 158px; color: #444; }

.sharing { position: absolute; left: 519px; top: 741px; width: 386px; height: 31px; display: flex; align-items: center; gap: 7px; padding: 0 7px; background: #2b2c2ef2; color: #ddd; font: 9px/12px Roboto, sans-serif; box-shadow: 0 1px 3px #222; }
.sharing span { flex: 1; }
.sharing button { flex: none; width: 75px; height: 23px; background: #7baaf7; border-radius: 2px; color: #24334f; }
.sharing a { color: #6f9ce0; }
.pause { width: 5px; height: 8px; border: solid #ccc; border-width: 0 1px; }
.sbar { position: absolute; inset: auto 0 0 0; height: 23px; display: flex; align-items: center; padding-left: 7px; gap: 13px; background: linear-gradient(90deg, #083a5c, #03305c); color: #fff; }
.sbar .run { display: grid; place-items: center; width: 27px; height: 23px; margin-right: -13px; border-bottom: 2px solid #7ab8ec; }
.sbar .act { background: #0d5cab; }
.stray { margin-left: auto; display: flex; align-items: center; gap: 7px; padding-right: 17px; font-size: 9px; }
.stray time { margin: 0 14px 0 6px; font-size: 8px; }

/* Windows taskbars */
.task { display: flex; height: 40px; background: linear-gradient(90deg, #000, #07080a 35%, #0d0805 60%, #17161a); color: #fff; }
.task > span { flex: 0 0 49px; display: grid; place-items: center; border-bottom: 2px solid transparent; padding-top: 2px; }
.task .act { background: #3b3b3b; border-color: #ff80bd; }
.task .run { border-image: linear-gradient(90deg, transparent 8%, #ff80bd 8%, #ff80bd 90%, transparent 90%) 2; }
.vsp { color: #a36ee0; }
.task time { margin-left: auto; padding: 1px 7px 0 0; text-align: center; font-size: 11px; line-height: 19px; }
.big { height: 50px; }
.big > span { flex-basis: 62px; }
.big time { margin: 0; padding: 2px 0; width: 68px; font-size: 14px; line-height: 23px; }
.tray { margin-left: auto; display: flex; align-items: center; gap: 12px; margin-right: 15px; font-size: 14px; }
.ppl { margin-right: 18px; }
.noti { position: relative; width: 67px; padding: 16px 0 0 23px; margin-right: 6px; border-right: 1px solid #666; }
.noti em { position: absolute; left: 32px; top: 24px; width: 20px; height: 20px; border: 1px solid #888; border-radius: 50%; background: #333; text-align: center; font-weight: 700; }

/* Visual Studio */
.vs { background: #5d6b99; }
.vmenu { display: flex; align-items: center; height: 43px; background: #ccd5f0; padding: 0 8px 2px 14px; }
.vlogo { color: #8d94c4; }
.vmenu nav { display: flex; gap: 25px; margin-left: 16px; }
.vsearch { display: flex; align-items: center; margin-left: 24px; flex: 0 0 276px; height: 28px; border: 1px solid #8a94b5; background: #fff; padding: 0 8px 0 5px; }
.vsearch input, .ssearch input { flex: 1; min-width: 0; }
::placeholder { color: #717171; opacity: 1; }
.vtitle { margin-left: 32px; color: #40508d; }
.hp { margin-left: auto; width: 25px; height: 25px; border-radius: 50%; background: #b4009e; color: #fff; font-size: 11px; text-align: center; line-height: 25px; }
.vmenu .w58 { margin-left: 30px; color: #40508d; }
.vtool { display: flex; align-items: center; height: 38px; background: #ccd5f0; padding: 0 25px 12px 11px; }
.grip { width: 6px; height: 22px; margin: 0 7px 0 3px; background: radial-gradient(#8a94b5 1px, transparent 1px) 0 0 / 3px 4px; }
.grip.slim { margin: 0 0 0 -2px; }
.s15, .s24, .s27, .s30 { display: grid; place-items: center; flex: none; }
.s15 { width: 15px; }
.s24 { width: 24px; }
.s27 { width: 27px; }
.s30 { width: 30px; }
.off { color: #9fa7c2; }
.off2 { color: #777; }
.sep { flex: none; width: 1px; height: 24px; margin: 0 7px; background: #95a3cc; }
.combo { position: relative; height: 27px; border: 1px solid #8a94b5; background: #f2f5fd; }
.combo select { padding-left: 5px; }
.combo::after { content: ""; position: absolute; right: 5px; top: 11px; border: 4px solid transparent; border-top: 5px solid #222; border-bottom: 0; }
.cfg { width: 81px; margin-right: 8px; }
.plat { width: 139px; }
.start { display: flex; align-items: center; gap: 7px; padding: 0 4px 0 9px; }
.live { margin-left: auto; display: flex; align-items: center; gap: 7px; }
.fbp { margin-left: 28px; }
.vmain { flex: 1; display: flex; padding: 8px 8px 8px 0; }
.vside { flex: 0 0 41px; writing-mode: vertical-rl; display: flex; gap: 15px; align-items: flex-end; padding-right: 8px; color: #fff; font-size: 14px; line-height: 24px; }
.vside span { width: 33px; border-left: 8px solid #40508d; }
.vcenter { flex: 1; min-width: 0; display: flex; flex-direction: column; }
.dtabs { display: flex; align-items: center; height: 27px; border-bottom: 2px solid #ccd5f0; color: #ccd5f0; gap: 8px; padding-right: 1px; }
.dtab { display: flex; align-items: center; gap: 10px; height: 25px; padding: 0 7px 0 5px; }
.dtab.on { background: #ccd5f0; color: #00235c; font-weight: 700; }
.dtab.on svg { color: #5d6b99; }
.dtab.pre { margin-left: auto; background: #40568d; }
.design { flex: 1; background: #f5f5f5; padding: 16px; }
.frame { position: relative; width: 824px; height: 503px; padding: 3px; border: 1px dotted #555; }
.form1 { height: 495px; display: flex; flex-direction: column; border: 1px solid #111; border-radius: 7px 7px 0 0; background: #b9d1ea; padding: 0 8px 8px; box-shadow: inset 0 -2px #2bc4e0; }
.ftitle { display: flex; align-items: center; gap: 7px; height: 37px; margin: 0 -8px; padding: 8px 8px 0 11px; background: linear-gradient(#99b4d1, #b9d1ea); border-radius: 6px 6px 0 0; }
.fbtns { display: flex; gap: 3px; margin: -6px 2px 0 auto; }
.fbtns i { width: 41px; height: 24px; border: 1px solid #66809e; border-radius: 3px; background: linear-gradient(#c3d5e8, #a3bcd6 50%, #b5cde6); display: grid; place-items: center; }
.fmin::after { content: ""; width: 16px; height: 6px; background: #fff; border: 1px solid #555; }
.fmax::after { content: ""; width: 15px; height: 13px; background: #8aa4c4; border: 3px solid #fff; outline: 1px solid #555; }
.fbtns .fx { background: linear-gradient(#e09a8f, #c44a33 50%, #d56f58); color: #fff; border-color: #5f1c14; }
.fbody { flex: 1; background: #f0f0f0; }
.h { position: absolute; width: 8px; height: 8px; background: #fff; border: 1px solid #000; }
.hs { left: 408px; bottom: -5px; }
.he { right: -5px; top: 246px; }
.hc { right: -5px; bottom: -5px; }
.phead { display: flex; align-items: center; justify-content: space-between; height: 27px; padding: 0 8px 0 4px; }
.phead span { display: flex; gap: 8px; align-items: center; }
.blue.phead { background: #40568d; color: #fff; }
.blue.phead span { color: #b0bad8; }
.gold { background: #f5cc84; }
.gold span { color: #6b5000; }
.output { margin-top: 10px; height: 238px; background: #f9faff; }
.otool { display: flex; align-items: center; height: 32px; padding: 0 8px; background: #ccd5f0; }
.otool .combo { width: 375px; margin: 0 2px 0 8px; }
.vright { flex: 0 0 542px; margin-left: 10px; display: flex; flex-direction: column; }
.solx { flex: 1; background: #f9faff; }
.stool { display: flex; align-items: center; height: 34px; padding-left: 4px; background: #ccd5f0; }
.pick { display: grid; place-items: center; height: 29px; background: #fdecc2; border: 1px solid #8a6500; }
.ssearch { display: flex; align-items: center; height: 28px; padding-left: 5px; background: #fff; border: 1px solid #8a94b5; gap: 2px; color: #555; }
.ssearch .s15 { height: 26px; border-left: 1px solid #8a94b5; background: #f2f5fd; color: #222; }
.tree { padding-top: 2px; }
.tree li { display: flex; align-items: center; gap: 6px; height: 24px; }
.l0 { padding-left: 18px; }
.l1 { padding-left: 11px; }
.l1 svg + svg { margin-left: 10px; }
.l2 { padding-left: 32px; }
.l2 svg + svg { margin-left: 10px; }
.l2 svg.i20 { margin-right: -2px; }
.l3 { padding-left: 54px; }
.l3 svg + svg { margin-left: 12px; }
.tree .cur { background: #e6e7ee; }
.stabs { display: flex; gap: 2px; height: 24px; color: #ccd5f0; }
.stabs span { padding: 3px 7px; background: #40568d; }
.stabs .on { background: #f9faff; color: #1e1e1e; }
.props { margin-top: 10px; height: 375px; background: #f9faff; display: flex; flex-direction: column; }
.pobj { display: flex; align-items: center; gap: 8px; height: 29px; padding: 0 6px 0 8px; background: #f2f5fd; }
.pobj svg { margin-left: auto; }
.ptool { display: flex; align-items: center; height: 32px; margin: 0 1px; padding-left: 2px; background: #ccd5f0; }
.ptool .pick { width: 29px; }
.gray { color: #8d8f99; padding-left: 6px; }
.props table { border-collapse: collapse; table-layout: fixed; width: 540px; margin: 1px 1px 0; color: #000; }
.c1 { width: 16px; }
.c2 { width: 245px; }
.props th { padding: 0 0 0 2px; background: #eeeef2; }
.props td { height: 23px; padding: 0 0 0 4px; border: 1px solid #eeeef2; border-top: 0; overflow: hidden; }
.props .cat td { background: #eeeef2; font-weight: 700; }
.props .curp td:nth-child(2) { background: #eeeef2; }
.ro td { color: #6d6d6d; }
.pdesc { margin-top: 22px; border-top: 1px solid #eeeef2; padding: 9px 9px; color: #000; }
.pdesc p { margin-top: 5px; }
.vstat { display: flex; align-items: center; gap: 8px; height: 30px; padding: 0 26px 0 5px; background: #40508d; color: #fff; }
.vstat button { display: flex; align-items: center; gap: 9px; margin-left: auto; }
.vstat .repo { margin-left: 18px; }
.bell { position: relative; margin-left: 20px; }
.bell em { position: absolute; left: 9px; top: 8px; width: 16px; height: 16px; border-radius: 50%; background: #e51400; font-size: 11px; line-height: 16px; text-align: center; }
```
